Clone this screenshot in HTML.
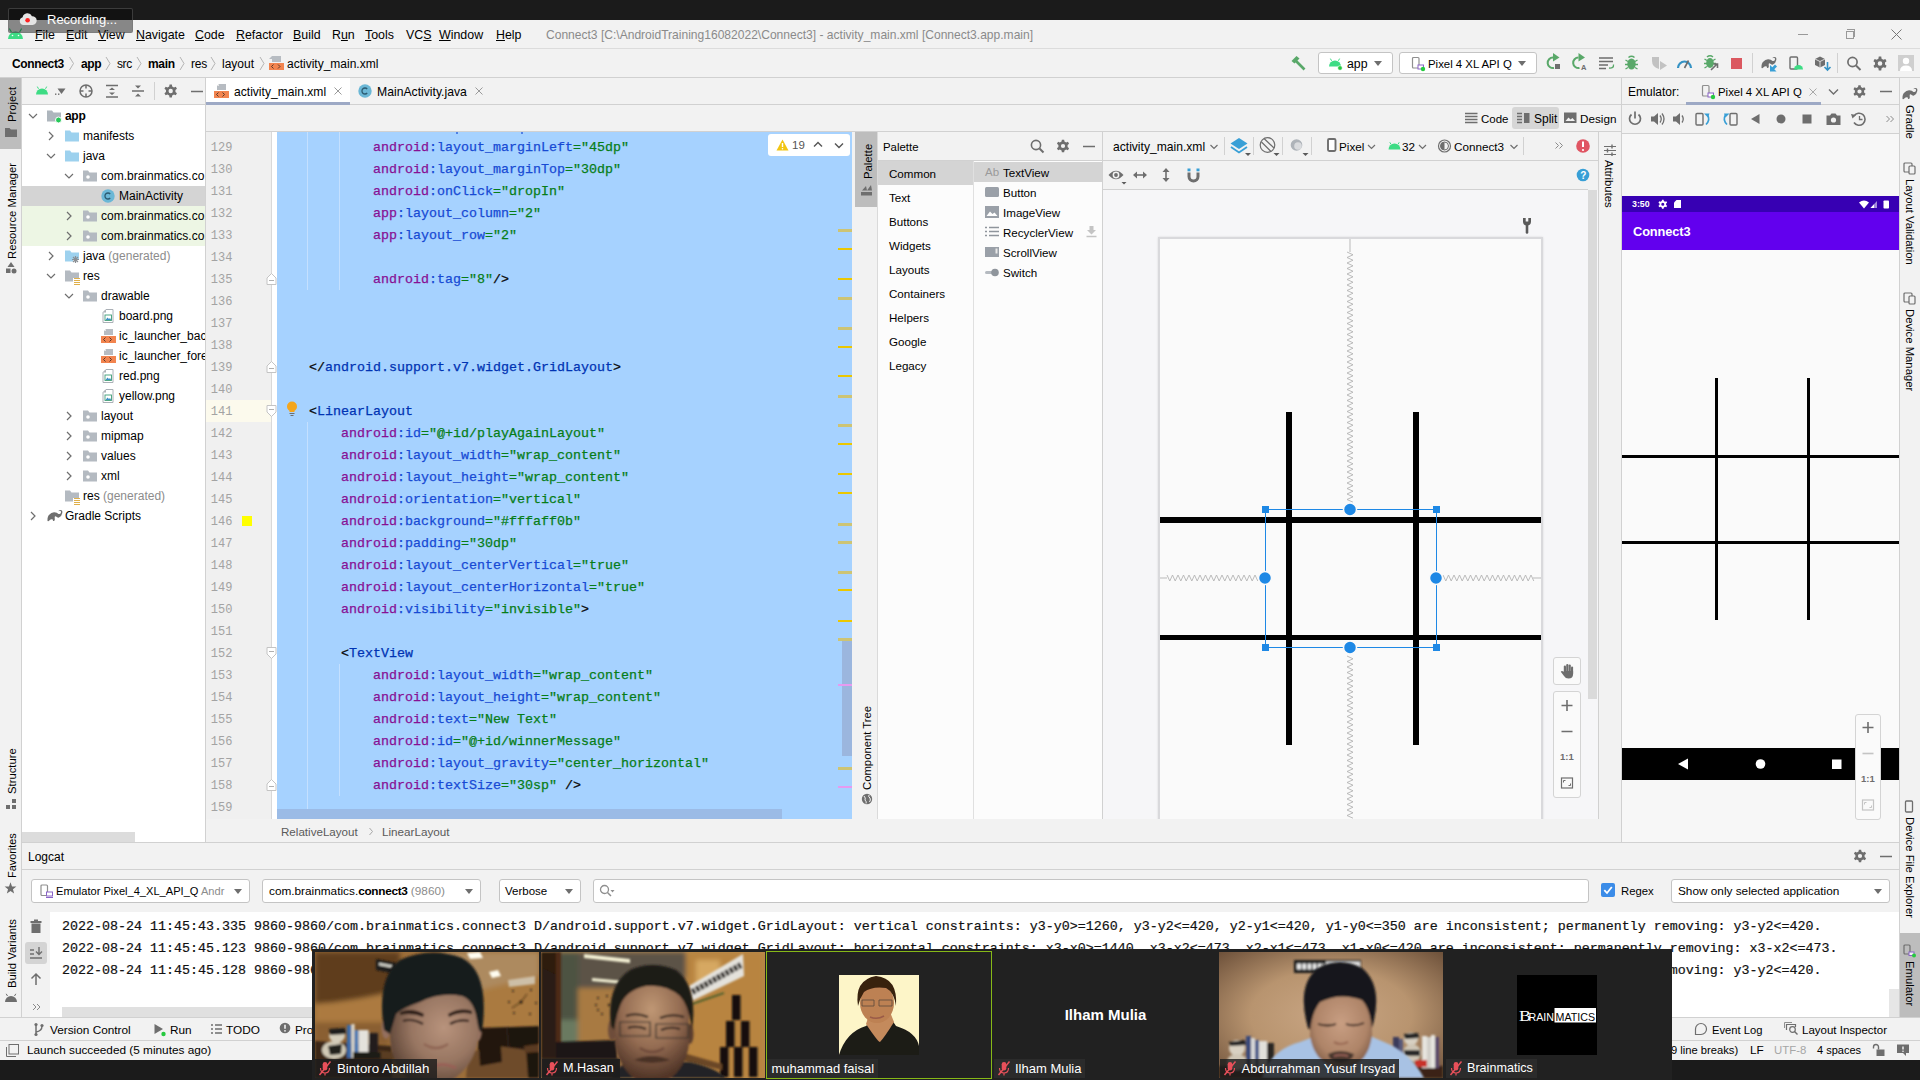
<!DOCTYPE html>
<html><head><meta charset="utf-8"><title>Connect3 - activity_main.xml</title>
<style>
*{box-sizing:border-box;margin:0;padding:0}
html,body{width:1920px;height:1080px;overflow:hidden;background:#f2f2f2;font-family:"Liberation Sans",sans-serif;font-size:12px;color:#000}
.a{position:absolute}
.t{position:absolute;white-space:nowrap;line-height:16px;font-size:12.5px;color:#000}
.g{color:#8c8c8c}
.b{font-weight:bold}
.mono{font-family:"Liberation Mono",monospace}
svg{position:absolute;overflow:visible}
.hl{position:absolute;background:#d1d1d1;height:1px}
.vl{position:absolute;background:#d1d1d1;width:1px}
.vt{position:absolute;white-space:nowrap;font-size:12.5px;line-height:16px;transform-origin:0 0}
.combo{position:absolute;background:#fff;border:1px solid #c4c4c4;border-radius:3px}
.tri{position:absolute;width:0;height:0;border-left:4.5px solid transparent;border-right:4.5px solid transparent;border-top:5.5px solid #6e6e6e}
</style></head><body>
<!-- top black bar -->
<div class="a" style="left:0;top:0;width:1920px;height:20px;background:#1b1b1b"></div>
<!-- menu bar -->
<div class="a" id="menubar" style="left:0;top:20px;width:1920px;height:28px;background:#f2f2f2"></div>
<div class="hl" style="left:0;top:48px;width:1920px;background:#dcdcdc"></div>
<!-- android logo -->
<svg style="left:7px;top:28px" width="17" height="12" viewBox="0 0 17 12"><path d="M1 11 A7.5 7.5 0 0 1 16 11 Z" fill="#3ddc84"/><path d="M4.2 3.8 L2.6 1 M12.8 3.8 L14.4 1" stroke="#3ddc84" stroke-width="1.2" stroke-linecap="round"/><circle cx="5.5" cy="7.5" r=".8" fill="#fff"/><circle cx="11.5" cy="7.5" r=".8" fill="#fff"/></svg>
<div class="t" style="left:35px;top:27px;font-size:12.4px"><u>F</u>ile</div>
<div class="t" style="left:66px;top:27px;font-size:12.4px"><u>E</u>dit</div>
<div class="t" style="left:98px;top:27px;font-size:12.4px"><u>V</u>iew</div>
<div class="t" style="left:136px;top:27px;font-size:12.4px"><u>N</u>avigate</div>
<div class="t" style="left:195px;top:27px;font-size:12.4px"><u>C</u>ode</div>
<div class="t" style="left:236px;top:27px;font-size:12.4px"><u>R</u>efactor</div>
<div class="t" style="left:293px;top:27px;font-size:12.4px"><u>B</u>uild</div>
<div class="t" style="left:332px;top:27px;font-size:12.4px">R<u>u</u>n</div>
<div class="t" style="left:365px;top:27px;font-size:12.4px"><u>T</u>ools</div>
<div class="t" style="left:406px;top:27px;font-size:12.4px">VC<u>S</u></div>
<div class="t" style="left:439px;top:27px;font-size:12.4px"><u>W</u>indow</div>
<div class="t" style="left:496px;top:27px;font-size:12.4px"><u>H</u>elp</div>
<div class="t" id="title" style="left:546px;top:27px;font-size:12.05px;color:#8a8a8a">Connect3 [C:\AndroidTraining16082022\Connect3] - activity_main.xml [Connect3.app.main]</div>
<!-- window controls -->
<div class="a" style="left:1798px;top:34px;width:10px;height:1px;background:#999"></div>
<div class="a" style="left:1846px;top:31px;width:8px;height:8px;border:1px solid #999"></div>
<div class="a" style="left:1844px;top:29px;width:8px;height:8px;border-top:1px solid #999;border-right:1px solid #999;transform:translate(3px,0)"></div>
<svg style="left:1891px;top:29px" width="11" height="11" viewBox="0 0 11 11"><path d="M.5 .5 L10.5 10.5 M10.5 .5 L.5 10.5" stroke="#777" stroke-width="1"/></svg>
<!-- recording overlay -->
<div class="a" style="left:8px;top:8px;width:125px;height:25px;background:rgba(8,8,8,.46);border:1px solid rgba(110,110,110,.45);border-radius:2px"></div>
<svg style="left:19px;top:12px" width="18" height="14" viewBox="0 0 18 14"><path d="M4.5 13 A4 4 0 0 1 3.6 5.2 A5 5 0 0 1 13 4.2 A4.4 4.4 0 0 1 13.6 13 Z" fill="#e4e4e4"/><circle cx="8.6" cy="8.2" r="2.3" fill="#f22"/></svg>
<div class="t" style="left:47px;top:12px;font-size:13px;color:#fff">Recording...</div>
<!-- nav bar -->
<div class="a" style="left:0;top:49px;width:1920px;height:28px;background:#f2f2f2"></div>
<div class="hl" style="left:0;top:77px;width:1920px"></div>
<!-- breadcrumbs -->
<div class="t b" style="left:12px;top:56px;font-size:12px;letter-spacing:-.35px">Connect3</div>
<div class="t b" style="left:81px;top:56px;font-size:12px;letter-spacing:-.4px">app</div>
<div class="t" style="left:117px;top:56px;font-size:12px;letter-spacing:-.4px">src</div>
<div class="t b" style="left:148px;top:56px;font-size:12px;letter-spacing:-.3px">main</div>
<div class="t" style="left:191px;top:56px;font-size:12px;letter-spacing:-.2px">res</div>
<div class="t" style="left:222px;top:56px;font-size:12px">layout</div>
<div class="t" style="left:287px;top:56px;font-size:12px">activity_main.xml</div>
<svg style="left:0;top:49px" width="290" height="28" viewBox="0 0 290 28"><g fill="none" stroke="#b4b4b4" stroke-width="1"><path d="M69.5 8 L73.5 14.5 L69.5 21"/><path d="M106 8 L110 14.5 L106 21"/><path d="M137 8 L141 14.5 L137 21"/><path d="M180 8 L184 14.5 L180 21"/><path d="M211 8 L215 14.5 L211 21"/><path d="M260 8 L264 14.5 L260 21"/></g>
<!-- xml file icon -->
<g id="xmlicon"><path d="M272 7 L278 7 L281 7 L281 13 L272 13 Z" fill="#b7bcc2"/><path d="M269 10 L272 7 L272 10 Z" fill="#b7bcc2"/><rect x="269" y="14" width="15" height="7" fill="#f2844f"/><path d="M273.5 15.5 L271.5 17.5 L273.5 19.5 M278 15.500 L280 17.5 L278 19.5" stroke="#5a3a2a" stroke-width="1" fill="none"/></g></svg>
<!-- hammer -->
<svg style="left:1290px;top:55px" width="17" height="17" viewBox="0 0 17 17"><path d="M5.5 5.5 L14.5 14.5" stroke="#59a869" stroke-width="2.6" stroke-linecap="butt"/><path d="M1.5 6 L6.5 1 L9.5 3.5 L4.5 8.5 Z" fill="#59a869"/></svg>
<!-- run config combos -->
<div class="combo" style="left:1318px;top:52px;width:75px;height:22px"></div>
<svg style="left:1328px;top:57px" width="16" height="14" viewBox="0 0 16 14"><path d="M1 9.5 A6 6 0 0 1 13 9.500 Z" fill="#3ddc84"/><path d="M3.600 3.800 L2.400 1.600 M10.400 3.800 L11.600 1.600" stroke="#3ddc84" stroke-width="1"/><circle cx="12" cy="11" r="2.300" fill="#26c940" stroke="#fff" stroke-width=".6"/></svg>
<div class="t" style="left:1347px;top:56px;font-size:12.3px">app</div>
<div class="tri" style="left:1374px;top:61px"></div>
<div class="combo" style="left:1399px;top:52px;width:138px;height:22px"></div>
<svg style="left:1411px;top:56px" width="16" height="16" viewBox="0 0 16 16"><rect x="1.500" y="1.500" width="6.500" height="10.500" rx="1" fill="none" stroke="#8f8f8f" stroke-width="1.200"/><rect x="7" y="9" width="5.500" height="4" fill="#fff" stroke="#8a63c7" stroke-width="1"/><circle cx="12" cy="13" r="2.200" fill="#26c940"/></svg>
<div class="t" style="left:1428px;top:56px;font-size:11.4px">Pixel 4 XL API Q</div>
<div class="tri" style="left:1518px;top:61px"></div>
<!-- main toolbar icons, centers at y=63 -->
<svg style="left:1540px;top:49px" width="380" height="28" viewBox="0 0 380 28">
<!-- rerun -->
<g fill="none" stroke="#59a869" stroke-width="2"><path d="M13 8.500 A5.300 5.300 0 1 0 14 19"/><path d="M13 4 L19.500 8.500 L13 12.500 Z" fill="#59a869" stroke="none"/></g><rect x="15" y="15" width="5" height="5" fill="#6e6e6e"/>
<g fill="none" stroke="#59a869" stroke-width="2"><path d="M38.500 8.500 A5.300 5.300 0 1 0 39.500 19"/><path d="M38.500 4 L45 8.500 L38.500 12.500 Z" fill="#59a869" stroke="none"/></g><text x="41" y="21" font-family="Liberation Sans" font-size="7.500" font-weight="bold" fill="#6e6e6e">A</text>
<!-- list -->
<g stroke="#6e6e6e" stroke-width="1.400"><path d="M59 9 H73 M59 12.500 H73 M59 16 H68 M59 19.500 H66"/></g><path d="M69 19 Q74 19.500 73.500 15.500" fill="none" stroke="#59a869" stroke-width="1.300"/>
<!-- bug -->
<g><ellipse cx="91.500" cy="15" rx="4.200" ry="5.500" fill="#59a869"/><path d="M88.500 8.500 Q91.500 6 94.500 8.500" stroke="#59a869" stroke-width="1.600" fill="none"/><path d="M85.500 11 L88 12.500 M97.500 11 L95 12.500 M85 15.500 H88 M98 15.500 H95 M85.500 20 L88 18.500 M97.500 20 L95 18.500" stroke="#59a869" stroke-width="1.300"/></g>
<!-- coverage gray -->
<path d="M112 8 L119 8 L119 20 Q112 18 112 12 Z" fill="#c2c2c2"/><path d="M120 12 L127 16.500 L120 21 Z" fill="#c2c2c2"/>
<!-- profiler -->
<path d="M138 19 A6.500 6.500 0 0 1 151 19" fill="none" stroke="#3592c4" stroke-width="2.200"/><path d="M144.500 19 L148.500 11.500" stroke="#6e6e6e" stroke-width="1.600"/>
<!-- attach debugger -->
<g><ellipse cx="170" cy="14" rx="3.800" ry="5" fill="#59a869"/><path d="M167 8 Q170 5.500 173 8" stroke="#59a869" stroke-width="1.500" fill="none"/><path d="M164.500 10 L167 11.500 M175.500 10 L173 11.500 M164 14.500 H167 M176 14.500 H173 M164.500 19 L167 17.500" stroke="#59a869" stroke-width="1.300"/><path d="M171 21 L177 15 M173.500 15 H177.500 V19" stroke="#6e6e6e" stroke-width="1.600" fill="none"/></g>
<!-- stop -->
<rect x="191" y="9" width="11" height="11" fill="#db5860"/>
<path d="M212.500 4 V24" stroke="#d1d1d1" stroke-width="1"/>
<!-- gradle elephant sync -->
<g transform="translate(215,1)"><path d="M6.500 18 Q6.200 13 8.500 11.500 Q10 9.500 13 9.300 Q16 9.200 17.500 11 Q19.500 11.500 20 9.500 Q20.300 8 19 7.800 Q17.800 8 17.300 8.300 Q18 7 19.500 7 Q21.800 7.200 21.300 10 Q20.800 13 18 14.500 Q16.500 15 15 13.500 Q14 12.800 13.700 14 L13.800 17 Q13.500 18.200 12 18 L11.800 16.500 Q10 15.800 8.800 17 Q8 18.500 6.500 18 Z" fill="#6e6e6e"/><path d="M15 15 L15 21.500 L21.500 21.500 L19.300 19.300 L22 16.500 L20 14.500 L17.300 17.200 Z" fill="#389fd6"/></g>
<!-- device manager -->
<rect x="250" y="8" width="7.500" height="12" rx="1" fill="none" stroke="#6e6e6e" stroke-width="1.400"/><path d="M254 20.500 A4.500 4.500 0 0 1 263 20.500 Z" fill="#3ddc84"/>
<!-- sdk manager -->
<path d="M275 10 L280 7.500 L285 10 L285 16 L280 18.500 L275 16 Z" fill="#6e6e6e"/><path d="M275 10 L280 12.500 L285 10 M280 12.500 V18.500" stroke="#f2f2f2" stroke-width=".8" fill="none"/><path d="M287.500 13 V21 M284.500 18 L287.500 21 L290.500 18" stroke="#3592c4" stroke-width="1.600" fill="none"/>
<path d="M297.500 4 V24" stroke="#d1d1d1" stroke-width="1"/>
<!-- search -->
<circle cx="312.500" cy="13" r="4.600" fill="none" stroke="#6e6e6e" stroke-width="1.700"/><path d="M316 16.500 L320.500 21" stroke="#6e6e6e" stroke-width="2"/>
<!-- gear -->
<g transform="translate(340,14.500)"><path d="M-1.58 -4.85 L-1.24 -6.89 L1.24 -6.89 L1.58 -4.85 L3.41 -3.79 L5.35 -4.52 L6.59 -2.37 L4.99 -1.06 L4.99 1.06 L6.59 2.37 L5.35 4.52 L3.41 3.79 L1.58 4.85 L1.24 6.89 L-1.24 6.89 L-1.58 4.85 L-3.41 3.79 L-5.35 4.52 L-6.59 2.37 L-4.99 1.06 L-4.99 -1.06 L-6.59 -2.37 L-5.35 -4.52 L-3.41 -3.79 Z M2.30 0 A2.30 2.30 0 1 0 -2.30 0 A2.30 2.30 0 1 0 2.30 0 Z" fill="#6e6e6e" fill-rule="evenodd"/></g>
<!-- avatar -->
<rect x="358" y="6" width="16" height="16" fill="#cfcfcf"/><circle cx="366" cy="12" r="3.200" fill="#fff"/><path d="M360 22 Q360 16.500 366 16.500 Q372 16.500 372 22 Z" fill="#fff"/>
</svg>
<!-- left tool strip -->
<div class="a" style="left:0;top:78px;width:21px;height:940px;background:#f2f2f2"></div>
<div class="vl" style="left:21px;top:78px;height:940px"></div>
<div class="a" style="left:0;top:78px;width:21px;height:71px;background:#bdbdbd"></div>
<div class="vt" style="left:4px;top:122px;transform:rotate(-90deg);font-size:11.3px">Project</div>
<svg style="left:5px;top:127px" width="12" height="10" viewBox="0 0 12 10"><path d="M0 1 H4.500 L6 2.500 H12 V10 H0 Z" fill="#6e6e6e"/></svg>
<div class="vt" style="left:4px;top:259px;transform:rotate(-90deg);font-size:11.3px">Resource Manager</div>
<svg style="left:5px;top:262px" width="12" height="12" viewBox="0 0 12 12"><path d="M6 0 L9.500 5 H2.500 Z" fill="#6e6e6e"/><rect x="1" y="6.500" width="4.500" height="4.500" fill="#6e6e6e"/><circle cx="9" cy="9" r="2.500" fill="#6e6e6e"/></svg>
<div class="vt" style="left:4px;top:794px;transform:rotate(-90deg);font-size:11.3px">Structure</div>
<svg style="left:6px;top:799px" width="11" height="11" viewBox="0 0 11 11"><rect x="6" y="0" width="4" height="4" fill="#6e6e6e"/><rect x="0" y="6" width="4" height="4" fill="#6e6e6e"/><rect x="6" y="6" width="4" height="4" fill="#6e6e6e"/></svg>
<div class="vt" style="left:4px;top:878px;transform:rotate(-90deg);font-size:10.9px">Favorites</div>
<svg style="left:4px;top:882px" width="13" height="13" viewBox="0 0 13 13"><polygon points="6.50,0.30 8.03,4.40 12.40,4.58 8.97,7.30 10.14,11.52 6.50,9.10 2.86,11.52 4.03,7.30 0.60,4.58 4.97,4.40" fill="#6e6e6e"/></svg>
<div class="vt" style="left:4px;top:988px;transform:rotate(-90deg);font-size:11.3px">Build Variants</div>
<svg style="left:5px;top:993px" width="12" height="9" viewBox="0 0 12 9"><path d="M0 9 A6 6 0 0 1 12 9 Z" fill="#6e6e6e"/><path d="M2.500 3 L1.200 .8 M9.500 3 L10.800 .8" stroke="#6e6e6e" stroke-width="1"/></svg>
<!-- project panel -->
<div class="a" style="left:22px;top:78px;width:184px;height:26px;background:#f2f2f2"></div>
<div class="hl" style="left:22px;top:104px;width:184px"></div>
<div class="a" style="left:22px;top:105px;width:184px;height:737px;background:#fff"></div>
<div class="vl" style="left:205px;top:78px;height:764px"></div>
<div class="hl" style="left:22px;top:842px;width:1877px"></div>
<!-- project toolbar -->
<svg style="left:22px;top:78px" width="184" height="26" viewBox="0 0 184 26">
<path d="M14 16.500 A6 6 0 0 1 26 16.500 Z" fill="#3ddc84"/><path d="M16.500 10.800 L15.300 8.600 M23.500 10.800 L24.700 8.600" stroke="#3ddc84" stroke-width="1"/>
<rect x="33" y="15.500" width="1.400" height="1.400" fill="#6e6e6e"/><rect x="36" y="15.500" width="1.400" height="1.400" fill="#6e6e6e"/><path d="M35.500 10.500 H43.500 L39.500 16 Z" fill="#6e6e6e"/>
<circle cx="64" cy="13" r="6" fill="none" stroke="#6e6e6e" stroke-width="1.500"/><path d="M64 7 V10.500 M64 19 V15.500 M58 13 H61.500 M70 13 H66.500" stroke="#6e6e6e" stroke-width="1.500"/>
<path d="M84 7.500 H96 M84 19 H96" stroke="#6e6e6e" stroke-width="1.500"/><path d="M87 12 L90 9.500 L93 12 Z M87 14.500 L90 17 L93 14.500 Z" fill="#6e6e6e"/>
<path d="M110 13 H122" stroke="#6e6e6e" stroke-width="1.500"/><path d="M113 7.500 L116 10.500 L119 7.500 Z M113 18.500 L116 15.500 L119 18.500 Z" fill="#6e6e6e"/>
<path d="M132.500 4 V22" stroke="#d1d1d1"/>
<g transform="translate(148.700,13)"><path d="M-1.50 -4.61 L-1.18 -6.54 L1.18 -6.54 L1.50 -4.61 L3.24 -3.60 L5.08 -4.29 L6.26 -2.25 L4.74 -1.01 L4.74 1.01 L6.26 2.25 L5.08 4.29 L3.24 3.60 L1.50 4.61 L1.18 6.54 L-1.18 6.54 L-1.50 4.61 L-3.24 3.60 L-5.08 4.29 L-6.26 2.25 L-4.74 1.01 L-4.74 -1.01 L-6.26 -2.25 L-5.08 -4.29 L-3.24 -3.60 Z M2.18 0 A2.18 2.18 0 1 0 -2.18 0 A2.18 2.18 0 1 0 2.18 0 Z" fill="#6e6e6e" fill-rule="evenodd"/></g>
<path d="M169 13.500 H181" stroke="#6e6e6e" stroke-width="1.500"/>
</svg>
<!-- project tree -->
<div class="a" style="left:22px;top:105px;width:183px;height:727px;overflow:hidden">
<svg style="left:6px;top:6px" width="10" height="10" viewBox="0 0 10 10"><path d="M1 3 L5 7 L9 3" fill="none" stroke="#6e6e6e" stroke-width="1.200"/></svg>
<svg style="left:25px;top:4px" width="16" height="16" viewBox="0 0 16 16"><path d="M0 1.500 H5 L6.500 3.500 H14 V12.500 H0 Z" fill="#aeb6bd"/><circle cx="11.500" cy="11" r="3" fill="#26c95a" stroke="#fff" stroke-width="1"/></svg>
<div class="t" style="left:43px;top:3px;font-size:12px"><b style="letter-spacing:-.3px">app</b></div>
<svg style="left:24px;top:26px" width="10" height="10" viewBox="0 0 10 10"><path d="M3 1 L7 5 L3 9" fill="none" stroke="#6e6e6e" stroke-width="1.200"/></svg>
<svg style="left:43px;top:24px" width="16" height="16" viewBox="0 0 16 16"><path d="M0 1.500 H5 L6.500 3.500 H14 V12.500 H0 Z" fill="#9dd1ee"/></svg>
<div class="t" style="left:61px;top:23px;font-size:12px">manifests</div>
<svg style="left:24px;top:46px" width="10" height="10" viewBox="0 0 10 10"><path d="M1 3 L5 7 L9 3" fill="none" stroke="#6e6e6e" stroke-width="1.200"/></svg>
<svg style="left:43px;top:44px" width="16" height="16" viewBox="0 0 16 16"><path d="M0 1.500 H5 L6.500 3.500 H14 V12.500 H0 Z" fill="#9dd1ee"/></svg>
<div class="t" style="left:61px;top:43px;font-size:12px">java</div>
<svg style="left:42px;top:66px" width="10" height="10" viewBox="0 0 10 10"><path d="M1 3 L5 7 L9 3" fill="none" stroke="#6e6e6e" stroke-width="1.200"/></svg>
<svg style="left:61px;top:64px" width="16" height="16" viewBox="0 0 16 16"><path d="M0 1.500 H5 L6.500 3.500 H14 V12.500 H0 Z" fill="#b4bac1"/><circle cx="5" cy="8" r="1.800" fill="#fff"/></svg>
<div class="t" style="left:79px;top:63px;font-size:12px">com.brainmatics.co</div>
<div class="a" style="left:0;top:81px;width:183px;height:20px;background:#d4d4d4"></div>
<svg style="left:79px;top:84px" width="16" height="16" viewBox="0 0 16 16"><circle cx="7" cy="7" r="6.700" fill="#6bb7d6"/><path d="M9.200 5 A3 3 0 1 0 9.200 9" fill="none" stroke="#2b5a70" stroke-width="1.300"/></svg>
<div class="t" style="left:97px;top:83px;font-size:12px">MainActivity</div>
<div class="a" style="left:0;top:101px;width:183px;height:20px;background:#edf6e4"></div>
<svg style="left:42px;top:106px" width="10" height="10" viewBox="0 0 10 10"><path d="M3 1 L7 5 L3 9" fill="none" stroke="#6e6e6e" stroke-width="1.200"/></svg>
<svg style="left:61px;top:104px" width="16" height="16" viewBox="0 0 16 16"><path d="M0 1.500 H5 L6.500 3.500 H14 V12.500 H0 Z" fill="#b4bac1"/><circle cx="5" cy="8" r="1.800" fill="#fff"/></svg>
<div class="t" style="left:79px;top:103px;font-size:12px">com.brainmatics.co</div>
<div class="a" style="left:0;top:121px;width:183px;height:20px;background:#edf6e4"></div>
<svg style="left:42px;top:126px" width="10" height="10" viewBox="0 0 10 10"><path d="M3 1 L7 5 L3 9" fill="none" stroke="#6e6e6e" stroke-width="1.200"/></svg>
<svg style="left:61px;top:124px" width="16" height="16" viewBox="0 0 16 16"><path d="M0 1.500 H5 L6.500 3.500 H14 V12.500 H0 Z" fill="#b4bac1"/><circle cx="5" cy="8" r="1.800" fill="#fff"/></svg>
<div class="t" style="left:79px;top:123px;font-size:12px">com.brainmatics.co</div>
<svg style="left:24px;top:146px" width="10" height="10" viewBox="0 0 10 10"><path d="M3 1 L7 5 L3 9" fill="none" stroke="#6e6e6e" stroke-width="1.200"/></svg>
<svg style="left:43px;top:144px" width="16" height="16" viewBox="0 0 16 16"><path d="M0 1.500 H5 L6.500 3.500 H14 V10 H8 V12.500 H0 Z" fill="#9dd1ee"/><g transform="translate(10.500,10.500)" stroke="#8a8f94" stroke-width="1.200"><path d="M-3.500 0 H3.500 M0 -3.500 V3.500 M-2.500 -2.500 L2.500 2.500 M-2.500 2.500 L2.500 -2.500"/></g></svg>
<div class="t" style="left:61px;top:143px;font-size:12px">java <span class="g">(generated)</span></div>
<svg style="left:24px;top:166px" width="10" height="10" viewBox="0 0 10 10"><path d="M1 3 L5 7 L9 3" fill="none" stroke="#6e6e6e" stroke-width="1.200"/></svg>
<svg style="left:43px;top:164px" width="16" height="16" viewBox="0 0 16 16"><path d="M0 1.500 H5 L6.500 3.500 H14 V9 H8 V12.500 H0 Z" fill="#b4bac1"/><path d="M9 9.500 H15 M9 11.500 H15 M9 13.500 H15 M9 15.500 H15" stroke="#e0b04a" stroke-width="1.100"/></svg>
<div class="t" style="left:61px;top:163px;font-size:12px">res</div>
<svg style="left:42px;top:186px" width="10" height="10" viewBox="0 0 10 10"><path d="M1 3 L5 7 L9 3" fill="none" stroke="#6e6e6e" stroke-width="1.200"/></svg>
<svg style="left:61px;top:184px" width="16" height="16" viewBox="0 0 16 16"><path d="M0 1.500 H5 L6.500 3.500 H14 V12.500 H0 Z" fill="#b4bac1"/><circle cx="5" cy="8" r="1.800" fill="#fff"/></svg>
<div class="t" style="left:79px;top:183px;font-size:12px">drawable</div>
<svg style="left:79px;top:204px" width="16" height="16" viewBox="0 0 16 16"><path d="M2 3.500 L5 .5 H12 V13.500 H2 Z" fill="#fff" stroke="#aab0b6" stroke-width="1"/><path d="M2 3.500 L5 .5 V3.500 Z" fill="#aab0b6"/><rect x="4" y="6" width="6.500" height="5.500" fill="#fff" stroke="#3f9d77" stroke-width=".9"/><path d="M4.500 11 L6.500 8.500 L8 10 L9 9 L10.200 11 Z" fill="#3a8fc4"/></svg>
<div class="t" style="left:97px;top:203px;font-size:12px">board.png</div>
<svg style="left:79px;top:224px" width="16" height="16" viewBox="0 0 16 16"><path d="M5 0 H12 V6 H3 V2 Z" fill="#b7bcc2"/><path d="M3 2 L5 0 V2 Z" fill="#e6e6e6"/><rect x="0" y="7" width="15" height="7" fill="#f2844f"/><path d="M4.500 8.500 L2.500 10.500 L4.500 12.500 M8.500 8.500 L10.500 10.500 L8.500 12.500" stroke="#5a3a2a" stroke-width="1" fill="none"/></svg>
<div class="t" style="left:97px;top:223px;font-size:12px">ic_launcher_back</div>
<svg style="left:79px;top:244px" width="16" height="16" viewBox="0 0 16 16"><path d="M5 0 H12 V6 H3 V2 Z" fill="#b7bcc2"/><path d="M3 2 L5 0 V2 Z" fill="#e6e6e6"/><rect x="0" y="7" width="15" height="7" fill="#f2844f"/><path d="M4.500 8.500 L2.500 10.500 L4.500 12.500 M8.500 8.500 L10.500 10.500 L8.500 12.500" stroke="#5a3a2a" stroke-width="1" fill="none"/></svg>
<div class="t" style="left:97px;top:243px;font-size:12px">ic_launcher_fore</div>
<svg style="left:79px;top:264px" width="16" height="16" viewBox="0 0 16 16"><path d="M2 3.500 L5 .5 H12 V13.500 H2 Z" fill="#fff" stroke="#aab0b6" stroke-width="1"/><path d="M2 3.500 L5 .5 V3.500 Z" fill="#aab0b6"/><rect x="4" y="6" width="6.500" height="5.500" fill="#fff" stroke="#3f9d77" stroke-width=".9"/><path d="M4.500 11 L6.500 8.500 L8 10 L9 9 L10.200 11 Z" fill="#3a8fc4"/></svg>
<div class="t" style="left:97px;top:263px;font-size:12px">red.png</div>
<svg style="left:79px;top:284px" width="16" height="16" viewBox="0 0 16 16"><path d="M2 3.500 L5 .5 H12 V13.500 H2 Z" fill="#fff" stroke="#aab0b6" stroke-width="1"/><path d="M2 3.500 L5 .5 V3.500 Z" fill="#aab0b6"/><rect x="4" y="6" width="6.500" height="5.500" fill="#fff" stroke="#3f9d77" stroke-width=".9"/><path d="M4.500 11 L6.500 8.500 L8 10 L9 9 L10.200 11 Z" fill="#3a8fc4"/></svg>
<div class="t" style="left:97px;top:283px;font-size:12px">yellow.png</div>
<svg style="left:42px;top:306px" width="10" height="10" viewBox="0 0 10 10"><path d="M3 1 L7 5 L3 9" fill="none" stroke="#6e6e6e" stroke-width="1.200"/></svg>
<svg style="left:61px;top:304px" width="16" height="16" viewBox="0 0 16 16"><path d="M0 1.500 H5 L6.500 3.500 H14 V12.500 H0 Z" fill="#b4bac1"/><circle cx="5" cy="8" r="1.800" fill="#fff"/></svg>
<div class="t" style="left:79px;top:303px;font-size:12px">layout</div>
<svg style="left:42px;top:326px" width="10" height="10" viewBox="0 0 10 10"><path d="M3 1 L7 5 L3 9" fill="none" stroke="#6e6e6e" stroke-width="1.200"/></svg>
<svg style="left:61px;top:324px" width="16" height="16" viewBox="0 0 16 16"><path d="M0 1.500 H5 L6.500 3.500 H14 V12.500 H0 Z" fill="#b4bac1"/><circle cx="5" cy="8" r="1.800" fill="#fff"/></svg>
<div class="t" style="left:79px;top:323px;font-size:12px">mipmap</div>
<svg style="left:42px;top:346px" width="10" height="10" viewBox="0 0 10 10"><path d="M3 1 L7 5 L3 9" fill="none" stroke="#6e6e6e" stroke-width="1.200"/></svg>
<svg style="left:61px;top:344px" width="16" height="16" viewBox="0 0 16 16"><path d="M0 1.500 H5 L6.500 3.500 H14 V12.500 H0 Z" fill="#b4bac1"/><circle cx="5" cy="8" r="1.800" fill="#fff"/></svg>
<div class="t" style="left:79px;top:343px;font-size:12px">values</div>
<svg style="left:42px;top:366px" width="10" height="10" viewBox="0 0 10 10"><path d="M3 1 L7 5 L3 9" fill="none" stroke="#6e6e6e" stroke-width="1.200"/></svg>
<svg style="left:61px;top:364px" width="16" height="16" viewBox="0 0 16 16"><path d="M0 1.500 H5 L6.500 3.500 H14 V12.500 H0 Z" fill="#b4bac1"/><circle cx="5" cy="8" r="1.800" fill="#fff"/></svg>
<div class="t" style="left:79px;top:363px;font-size:12px">xml</div>
<svg style="left:43px;top:384px" width="16" height="16" viewBox="0 0 16 16"><path d="M0 1.500 H5 L6.500 3.500 H14 V9 H8 V12.500 H0 Z" fill="#b4bac1"/><path d="M9 9.500 H15 M9 11.500 H15 M9 13.500 H15 M9 15.500 H15" stroke="#e0b04a" stroke-width="1.100"/></svg>
<div class="t" style="left:61px;top:383px;font-size:12px">res <span class="g">(generated)</span></div>
<svg style="left:6px;top:406px" width="10" height="10" viewBox="0 0 10 10"><path d="M3 1 L7 5 L3 9" fill="none" stroke="#6e6e6e" stroke-width="1.200"/></svg>
<svg style="left:25px;top:404px" width="16" height="16" viewBox="0 0 16 16"><g transform="translate(-6,-6)"><path d="M6.500 18 Q6.200 13 8.500 11.500 Q10 9.500 13 9.300 Q16 9.200 17.500 11 Q19.500 11.500 20 9.500 Q20.300 8 19 7.800 Q17.800 8 17.300 8.300 Q18 7 19.500 7 Q21.800 7.200 21.300 10 Q20.800 13 18 14.500 Q16.500 15 15 13.500 Q14 12.800 13.700 14 L13.800 17 Q13.500 18.200 12 18 L11.800 16.500 Q10 15.800 8.800 17 Q8 18.500 6.500 18 Z" fill="#6e6e6e"/></g></svg>
<div class="t" style="left:43px;top:403px;font-size:12px">Gradle Scripts</div>
</div>
<div class="a" style="left:22px;top:832px;width:113px;height:10px;background:#dcdcdc"></div>
<!-- editor tabs -->
<div class="a" style="left:206px;top:78px;width:1415px;height:26px;background:#f2f2f2"></div>
<div class="a" style="left:206px;top:78px;width:144px;height:26px;background:#fff"></div>
<div class="hl" style="left:206px;top:104px;width:1415px"></div>
<div class="a" style="left:206px;top:102px;width:144px;height:3px;background:#9da9c5"></div>
<svg style="left:214px;top:84px" width="16" height="16" viewBox="0 0 16 16"><path d="M5 0 H12 V6 H3 V2 Z" fill="#b7bcc2"/><path d="M3 2 L5 0 V2 Z" fill="#e6e6e6"/><rect x="0" y="7" width="15" height="7" fill="#f2844f"/><path d="M4.500 8.500 L2.500 10.500 L4.500 12.500 M8.500 8.500 L10.500 10.500 L8.500 12.500" stroke="#5a3a2a" stroke-width="1" fill="none"/></svg>
<div class="t" style="left:234px;top:84px;font-size:12.1px">activity_main.xml</div>
<svg style="left:334px;top:87px" width="8" height="8" viewBox="0 0 8 8"><path d="M.5 .5 L7.500 7.500 M7.500 .5 L.5 7.500" stroke="#9a9a9a" stroke-width="1"/></svg>
<svg style="left:358px;top:84px" width="14" height="14" viewBox="0 0 14 14"><circle cx="7" cy="7" r="6.700" fill="#6bb7d6"/><path d="M9.200 5 A3 3 0 1 0 9.200 9" fill="none" stroke="#2b5a70" stroke-width="1.300"/></svg>
<div class="t" style="left:377px;top:84px;font-size:12.2px">MainActivity.java</div>
<svg style="left:475px;top:87px" width="8" height="8" viewBox="0 0 8 8"><path d="M.5 .5 L7.500 7.500 M7.500 .5 L.5 7.500" stroke="#9a9a9a" stroke-width="1"/></svg>
<div class="a" style="left:206px;top:105px;width:1415px;height:26px;background:#f2f2f2"></div>
<div class="hl" style="left:206px;top:131px;width:1415px"></div>
<div class="a" style="left:1512px;top:107px;width:47px;height:22px;background:#d6d6d6;border-radius:3px"></div>
<svg style="left:1465px;top:112px" width="13" height="12" viewBox="0 0 13 12"><path d="M0 1.500 H12.500 M0 4.500 H12.500 M0 7.500 H12.500 M0 10.500 H12.500" stroke="#6e6e6e" stroke-width="1.300"/></svg>
<div class="t" style="left:1481px;top:111px;font-size:11.5px">Code</div>
<svg style="left:1517px;top:112px" width="13" height="12" viewBox="0 0 13 12"><path d="M0 1.500 H5 M0 4.500 H5 M0 7.500 H5 M0 10.500 H5" stroke="#6e6e6e" stroke-width="1.300"/><rect x="7" y="1" width="5.500" height="10" fill="#6e6e6e"/></svg>
<div class="t" style="left:1534px;top:111px;font-size:12px">Split</div>
<svg style="left:1564px;top:112px" width="13" height="12" viewBox="0 0 13 12"><rect x="0" y=".5" width="12.500" height="10.500" fill="#6e6e6e"/><path d="M1.500 9 L4.500 5.500 L6.500 7.500 L8.500 6 L11 9 Z" fill="#f2f2f2"/></svg>
<div class="t" style="left:1580px;top:111px;font-size:11.7px">Design</div>
<div class="a" id="editor" style="left:206px;top:132px;width:646px;height:687px;background:#fff;overflow:hidden">
<div class="a" style="left:0;top:0;width:65px;height:687px;background:#f0f0f0"></div>
<div class="a" style="left:0;top:268px;width:65px;height:22px;background:#fcfaed"></div>
<div class="vl" style="left:65px;top:0;height:687px;background:#d9d9d9"></div>
<div class="a" style="left:71px;top:0;width:575px;height:687px;background:#a6d2ff"></div>
<div class="vl" style="left:101px;top:0px;height:158px;background:#c4e0ff"></div>
<div class="vl" style="left:133px;top:0px;height:158px;background:#c4e0ff"></div>
<div class="vl" style="left:101px;top:290px;height:397px;background:#c4e0ff"></div>
<div class="vl" style="left:133px;top:532px;height:132px;background:#c4e0ff"></div>
<div class="a" style="left:71px;top:677px;width:505px;height:10px;background:#9bbbe6"></div>
<div class="a" style="left:636px;top:508px;width:10px;height:116px;background:#9bb6de"></div>
<div class="a" style="left:632px;top:97px;width:14px;height:3px;background:#cdc474"></div>
<div class="a" style="left:632px;top:116px;width:14px;height:2px;background:#ebc700"></div>
<div class="a" style="left:632px;top:146px;width:14px;height:2px;background:#ebc700"></div>
<div class="a" style="left:632px;top:165px;width:14px;height:3px;background:#cdc474"></div>
<div class="a" style="left:632px;top:195px;width:14px;height:3px;background:#cdc474"></div>
<div class="a" style="left:632px;top:214px;width:14px;height:2px;background:#ebc700"></div>
<div class="a" style="left:632px;top:243px;width:14px;height:2px;background:#ebc700"></div>
<div class="a" style="left:632px;top:263px;width:14px;height:3px;background:#cdc474"></div>
<div class="a" style="left:632px;top:292px;width:14px;height:3px;background:#cdc474"></div>
<div class="a" style="left:632px;top:311px;width:14px;height:2px;background:#ebc700"></div>
<div class="a" style="left:632px;top:341px;width:14px;height:2px;background:#ebc700"></div>
<div class="a" style="left:632px;top:360px;width:14px;height:2px;background:#ebc700"></div>
<div class="a" style="left:632px;top:391px;width:14px;height:3px;background:#cdc474"></div>
<div class="a" style="left:632px;top:409px;width:14px;height:3px;background:#cdc474"></div>
<div class="a" style="left:632px;top:439px;width:14px;height:3px;background:#cdc474"></div>
<div class="a" style="left:632px;top:457px;width:14px;height:2px;background:#ebc700"></div>
<div class="a" style="left:632px;top:488px;width:14px;height:2px;background:#ebc700"></div>
<div class="a" style="left:632px;top:506px;width:14px;height:3px;background:#cdc474"></div>
<div class="a" style="left:632px;top:635px;width:14px;height:3px;background:#cdc474"></div>
<div class="a" style="left:632px;top:552px;width:14px;height:1.500px;background:#e69af0"></div>
<div class="a" style="left:632px;top:654px;width:14px;height:1.500px;background:#e69af0"></div>
<div class="t mono" style="left:4.800px;top:8px;font-size:12px;color:#a3a3a3">129</div>
<div class="t mono" style="left:167px;top:7.8px;font-size:13.33px;-webkit-text-stroke:.25px"><span style="color:#871094">android</span><span style="color:#174ad4">:layout_marginLeft</span><span style="color:#067d17">="45dp"</span></div>
<div class="t mono" style="left:4.800px;top:30px;font-size:12px;color:#a3a3a3">130</div>
<div class="t mono" style="left:167px;top:29.8px;font-size:13.33px;-webkit-text-stroke:.25px"><span style="color:#871094">android</span><span style="color:#174ad4">:layout_marginTop</span><span style="color:#067d17">="30dp"</span></div>
<div class="t mono" style="left:4.800px;top:52px;font-size:12px;color:#a3a3a3">131</div>
<div class="t mono" style="left:167px;top:51.8px;font-size:13.33px;-webkit-text-stroke:.25px"><span style="color:#871094">android</span><span style="color:#174ad4">:onClick</span><span style="color:#067d17">="dropIn"</span></div>
<div class="t mono" style="left:4.800px;top:74px;font-size:12px;color:#a3a3a3">132</div>
<div class="t mono" style="left:167px;top:73.8px;font-size:13.33px;-webkit-text-stroke:.25px"><span style="color:#871094">app</span><span style="color:#174ad4">:layout_column</span><span style="color:#067d17">="2"</span></div>
<div class="t mono" style="left:4.800px;top:96px;font-size:12px;color:#a3a3a3">133</div>
<div class="t mono" style="left:167px;top:95.8px;font-size:13.33px;-webkit-text-stroke:.25px"><span style="color:#871094">app</span><span style="color:#174ad4">:layout_row</span><span style="color:#067d17">="2"</span></div>
<div class="t mono" style="left:4.800px;top:118px;font-size:12px;color:#a3a3a3">134</div>
<div class="t mono" style="left:4.800px;top:140px;font-size:12px;color:#a3a3a3">135</div>
<div class="t mono" style="left:167px;top:139.8px;font-size:13.33px;-webkit-text-stroke:.25px"><span style="color:#871094">android</span><span style="color:#174ad4">:tag</span><span style="color:#067d17">="8"</span><span style="color:#080808">/&gt;</span></div>
<div class="t mono" style="left:4.800px;top:162px;font-size:12px;color:#a3a3a3">136</div>
<div class="t mono" style="left:4.800px;top:184px;font-size:12px;color:#a3a3a3">137</div>
<div class="t mono" style="left:4.800px;top:206px;font-size:12px;color:#a3a3a3">138</div>
<div class="t mono" style="left:4.800px;top:228px;font-size:12px;color:#a3a3a3">139</div>
<div class="t mono" style="left:103px;top:227.8px;font-size:13.33px;-webkit-text-stroke:.25px"><span style="color:#080808">&lt;/</span><span style="color:#0033b3">android.support.v7.widget.GridLayout</span><span style="color:#080808">&gt;</span></div>
<div class="t mono" style="left:4.800px;top:250px;font-size:12px;color:#a3a3a3">140</div>
<div class="t mono" style="left:4.800px;top:272px;font-size:12px;color:#a3a3a3">141</div>
<div class="t mono" style="left:103px;top:271.8px;font-size:13.33px;-webkit-text-stroke:.25px"><span style="color:#080808">&lt;</span><span style="color:#0033b3">LinearLayout</span><span style="color:#080808"></span></div>
<div class="t mono" style="left:4.800px;top:294px;font-size:12px;color:#a3a3a3">142</div>
<div class="t mono" style="left:135px;top:293.8px;font-size:13.33px;-webkit-text-stroke:.25px"><span style="color:#871094">android</span><span style="color:#174ad4">:id</span><span style="color:#067d17">="@+id/playAgainLayout"</span></div>
<div class="t mono" style="left:4.800px;top:316px;font-size:12px;color:#a3a3a3">143</div>
<div class="t mono" style="left:135px;top:315.8px;font-size:13.33px;-webkit-text-stroke:.25px"><span style="color:#871094">android</span><span style="color:#174ad4">:layout_width</span><span style="color:#067d17">="wrap_content"</span></div>
<div class="t mono" style="left:4.800px;top:338px;font-size:12px;color:#a3a3a3">144</div>
<div class="t mono" style="left:135px;top:337.8px;font-size:13.33px;-webkit-text-stroke:.25px"><span style="color:#871094">android</span><span style="color:#174ad4">:layout_height</span><span style="color:#067d17">="wrap_content"</span></div>
<div class="t mono" style="left:4.800px;top:360px;font-size:12px;color:#a3a3a3">145</div>
<div class="t mono" style="left:135px;top:359.8px;font-size:13.33px;-webkit-text-stroke:.25px"><span style="color:#871094">android</span><span style="color:#174ad4">:orientation</span><span style="color:#067d17">="vertical"</span></div>
<div class="t mono" style="left:4.800px;top:382px;font-size:12px;color:#a3a3a3">146</div>
<div class="t mono" style="left:135px;top:381.8px;font-size:13.33px;-webkit-text-stroke:.25px"><span style="color:#871094">android</span><span style="color:#174ad4">:background</span><span style="color:#067d17">="#fffaff0b"</span></div>
<div class="t mono" style="left:4.800px;top:404px;font-size:12px;color:#a3a3a3">147</div>
<div class="t mono" style="left:135px;top:403.8px;font-size:13.33px;-webkit-text-stroke:.25px"><span style="color:#871094">android</span><span style="color:#174ad4">:padding</span><span style="color:#067d17">="30dp"</span></div>
<div class="t mono" style="left:4.800px;top:426px;font-size:12px;color:#a3a3a3">148</div>
<div class="t mono" style="left:135px;top:425.8px;font-size:13.33px;-webkit-text-stroke:.25px"><span style="color:#871094">android</span><span style="color:#174ad4">:layout_centerVertical</span><span style="color:#067d17">="true"</span></div>
<div class="t mono" style="left:4.800px;top:448px;font-size:12px;color:#a3a3a3">149</div>
<div class="t mono" style="left:135px;top:447.8px;font-size:13.33px;-webkit-text-stroke:.25px"><span style="color:#871094">android</span><span style="color:#174ad4">:layout_centerHorizontal</span><span style="color:#067d17">="true"</span></div>
<div class="t mono" style="left:4.800px;top:470px;font-size:12px;color:#a3a3a3">150</div>
<div class="t mono" style="left:135px;top:469.8px;font-size:13.33px;-webkit-text-stroke:.25px"><span style="color:#871094">android</span><span style="color:#174ad4">:visibility</span><span style="color:#067d17">="invisible"</span><span style="color:#080808">&gt;</span></div>
<div class="t mono" style="left:4.800px;top:492px;font-size:12px;color:#a3a3a3">151</div>
<div class="t mono" style="left:4.800px;top:514px;font-size:12px;color:#a3a3a3">152</div>
<div class="t mono" style="left:135px;top:513.8px;font-size:13.33px;-webkit-text-stroke:.25px"><span style="color:#080808">&lt;</span><span style="color:#0033b3">TextView</span><span style="color:#080808"></span></div>
<div class="t mono" style="left:4.800px;top:536px;font-size:12px;color:#a3a3a3">153</div>
<div class="t mono" style="left:167px;top:535.8px;font-size:13.33px;-webkit-text-stroke:.25px"><span style="color:#871094">android</span><span style="color:#174ad4">:layout_width</span><span style="color:#067d17">="wrap_content"</span></div>
<div class="t mono" style="left:4.800px;top:558px;font-size:12px;color:#a3a3a3">154</div>
<div class="t mono" style="left:167px;top:557.8px;font-size:13.33px;-webkit-text-stroke:.25px"><span style="color:#871094">android</span><span style="color:#174ad4">:layout_height</span><span style="color:#067d17">="wrap_content"</span></div>
<div class="t mono" style="left:4.800px;top:580px;font-size:12px;color:#a3a3a3">155</div>
<div class="t mono" style="left:167px;top:579.8px;font-size:13.33px;-webkit-text-stroke:.25px"><span style="color:#871094">android</span><span style="color:#174ad4">:text</span><span style="color:#067d17">="New Text"</span></div>
<div class="t mono" style="left:4.800px;top:602px;font-size:12px;color:#a3a3a3">156</div>
<div class="t mono" style="left:167px;top:601.8px;font-size:13.33px;-webkit-text-stroke:.25px"><span style="color:#871094">android</span><span style="color:#174ad4">:id</span><span style="color:#067d17">="@+id/winnerMessage"</span></div>
<div class="t mono" style="left:4.800px;top:624px;font-size:12px;color:#a3a3a3">157</div>
<div class="t mono" style="left:167px;top:623.8px;font-size:13.33px;-webkit-text-stroke:.25px"><span style="color:#871094">android</span><span style="color:#174ad4">:layout_gravity</span><span style="color:#067d17">="center_horizontal"</span></div>
<div class="t mono" style="left:4.800px;top:646px;font-size:12px;color:#a3a3a3">158</div>
<div class="t mono" style="left:167px;top:645.8px;font-size:13.33px;-webkit-text-stroke:.25px"><span style="color:#871094">android</span><span style="color:#174ad4">:textSize</span><span style="color:#067d17">="30sp"</span><span style="color:#080808"> /&gt;</span></div>
<div class="t mono" style="left:4.800px;top:668px;font-size:12px;color:#a3a3a3">159</div>
<div class="a" style="left:250px;top:0;width:2px;height:2px;background:#174ad4;opacity:.6"></div>
<div class="a" style="left:315px;top:0;width:2px;height:2px;background:#174ad4;opacity:.6"></div>
<svg style="left:60px;top:141px" width="11" height="12" viewBox="0 0 11 12"><path d="M1 11.500 H10 V5 L5.500 .5 L1 5 Z" fill="#fff" stroke="#c4c4c4" stroke-width="1"/><path d="M3 7.500 H8" stroke="#b0b0b0" stroke-width="1"/></svg>
<svg style="left:60px;top:229px" width="11" height="12" viewBox="0 0 11 12"><path d="M1 11.500 H10 V5 L5.500 .5 L1 5 Z" fill="#fff" stroke="#c4c4c4" stroke-width="1"/><path d="M3 7.500 H8" stroke="#b0b0b0" stroke-width="1"/></svg>
<svg style="left:60px;top:273px" width="11" height="12" viewBox="0 0 11 12"><path d="M1 .5 H10 V7 L5.500 11.500 L1 7 Z" fill="#fff" stroke="#c4c4c4" stroke-width="1"/><path d="M3 4.500 H8" stroke="#b0b0b0" stroke-width="1"/></svg>
<svg style="left:60px;top:515px" width="11" height="12" viewBox="0 0 11 12"><path d="M1 .5 H10 V7 L5.500 11.500 L1 7 Z" fill="#fff" stroke="#c4c4c4" stroke-width="1"/><path d="M3 4.500 H8" stroke="#b0b0b0" stroke-width="1"/></svg>
<svg style="left:60px;top:647px" width="11" height="12" viewBox="0 0 11 12"><path d="M1 11.500 H10 V5 L5.500 .5 L1 5 Z" fill="#fff" stroke="#c4c4c4" stroke-width="1"/><path d="M3 7.500 H8" stroke="#b0b0b0" stroke-width="1"/></svg>
<svg style="left:80px;top:269px" width="12" height="16" viewBox="0 0 12 16"><circle cx="6" cy="5.500" r="5" fill="#f4a51c"/><rect x="3.500" y="9" width="5" height="2" fill="#f4a51c"/><path d="M3.500 12.500 H8.500 M4.500 14.500 H7.500" stroke="#6e6e6e" stroke-width="1.200"/></svg>
<div class="a" style="left:36px;top:384px;width:10px;height:10px;background:#ffff00"></div>
<div class="a" style="left:562px;top:2px;width:82px;height:22px;background:#fff;border-radius:3px"></div>
<svg style="left:570px;top:7px" width="13" height="12" viewBox="0 0 13 12"><path d="M6.500 .5 L12.500 11.500 H.5 Z" fill="#f2c512"/><path d="M6.500 4 V8" stroke="#fff" stroke-width="1.400"/><circle cx="6.500" cy="9.800" r=".8" fill="#fff"/></svg>
<div class="t" style="left:586px;top:5px;font-size:11.500px;color:#555">19</div>
<svg style="left:607px;top:9px" width="10" height="7" viewBox="0 0 10 7"><path d="M1 5.500 L5 1.500 L9 5.500" fill="none" stroke="#555" stroke-width="1.400"/></svg>
<svg style="left:628px;top:10px" width="10" height="7" viewBox="0 0 10 7"><path d="M1 1.500 L5 5.500 L9 1.500" fill="none" stroke="#555" stroke-width="1.400"/></svg>
</div>
<div class="a" style="left:206px;top:819px;width:672px;height:23px;background:#f2f2f2"></div>
<div class="t" style="left:281px;top:824px;font-size:11.6px;color:#5a5a5a">RelativeLayout</div>
<svg style="left:368px;top:827px" width="6" height="9" viewBox="0 0 6 9"><path d="M1.500 1 L4.500 4.500 L1.500 8" fill="none" stroke="#a8a8a8" stroke-width="1"/></svg>
<div class="t" style="left:382px;top:824px;font-size:11.7px;color:#5a5a5a">LinearLayout</div>
<!-- palette strip -->
<div class="a" style="left:852px;top:132px;width:26px;height:687px;background:#f2f2f2"></div>
<div class="a" style="left:855px;top:132px;width:23px;height:75px;background:#bdbdbd"></div>
<div class="vt" style="left:860px;top:179px;transform:rotate(-90deg);font-size:11.3px">Palette</div>
<svg style="left:861px;top:184px" width="12" height="12" viewBox="0 0 12 12"><rect x="0" y="8" width="11" height="3.500" fill="#6e6e6e"/><path d="M1 6.500 L5 2 L6 6.500 Z M6 6.500 L10 1 L11 6.500 Z" fill="#6e6e6e"/></svg>
<div class="vt" style="left:859px;top:790px;transform:rotate(-90deg);font-size:11.3px">Component Tree</div>
<svg style="left:861px;top:793px" width="12" height="12" viewBox="0 0 12 12"><circle cx="6" cy="6" r="5.200" fill="#6e6e6e"/><path d="M3 3 Q5 5 4 7 Q6 9 5 10.500 M8 2 Q7 4 9 5 Q10 7 8.500 9" stroke="#f2f2f2" stroke-width="1" fill="none"/></svg>
<!-- palette panel -->
<div class="vl" style="left:877px;top:132px;height:687px;background:#dadada"></div>
<div class="a" style="left:878px;top:132px;width:224px;height:28px;background:#f2f2f2"></div>
<div class="hl" style="left:878px;top:160px;width:224px"></div>
<div class="a" style="left:878px;top:161px;width:224px;height:658px;background:#fcfcfc"></div>
<div class="vl" style="left:973px;top:161px;height:658px;background:#e0e0e0"></div>
<div class="vl" style="left:1102px;top:132px;height:687px"></div>
<div class="t" style="left:883px;top:139px;font-size:11.4px">Palette</div>
<svg style="left:1029px;top:138px" width="70" height="16" viewBox="0 0 70 16"><circle cx="7" cy="7" r="4.600" fill="none" stroke="#6e6e6e" stroke-width="1.600"/><path d="M10.500 10.500 L14.500 14.500" stroke="#6e6e6e" stroke-width="1.900"/><g transform="translate(34,8)"><path d="M-1.45 -4.46 L-1.14 -6.34 L1.14 -6.34 L1.45 -4.46 L3.14 -3.49 L4.92 -4.16 L6.06 -2.18 L4.59 -0.98 L4.59 0.98 L6.06 2.18 L4.92 4.16 L3.14 3.49 L1.45 4.46 L1.14 6.34 L-1.14 6.34 L-1.45 4.46 L-3.14 3.49 L-4.92 4.16 L-6.06 2.18 L-4.59 0.98 L-4.59 -0.98 L-6.06 -2.18 L-4.92 -4.16 L-3.14 -3.49 Z M2.12 0 A2.12 2.12 0 1 0 -2.12 0 A2.12 2.12 0 1 0 2.12 0 Z" fill="#6e6e6e" fill-rule="evenodd"/></g><path d="M54 8.500 H66" stroke="#6e6e6e" stroke-width="1.500"/></svg>
<div class="a" style="left:878px;top:161px;width:95px;height:24px;background:#d4d4d4"></div>
<div class="t" style="left:889px;top:165.5px;font-size:11.6px">Common</div>
<div class="t" style="left:889px;top:189.5px;font-size:11.6px">Text</div>
<div class="t" style="left:889px;top:213.5px;font-size:11.6px">Buttons</div>
<div class="t" style="left:889px;top:237.5px;font-size:11.6px">Widgets</div>
<div class="t" style="left:889px;top:261.5px;font-size:11.6px">Layouts</div>
<div class="t" style="left:889px;top:285.5px;font-size:11.6px">Containers</div>
<div class="t" style="left:889px;top:309.5px;font-size:11.6px">Helpers</div>
<div class="t" style="left:889px;top:333.5px;font-size:11.6px">Google</div>
<div class="t" style="left:889px;top:357.5px;font-size:11.6px">Legacy</div>
<div class="a" style="left:974px;top:162px;width:128px;height:20px;background:#d4d4d4"></div>
<div class="t" style="left:985px;top:164px;font-size:11.5px;color:#9a9a9a">Ab</div>
<div class="t" style="left:1003px;top:165px;font-size:11.6px">TextView</div>
<div class="a" style="left:985px;top:187px;width:14px;height:10px;background:#9aa0a8;border-radius:1.500px"></div>
<div class="t" style="left:1003px;top:185px;font-size:11.6px">Button</div>
<svg style="left:985px;top:206px" width="14" height="12" viewBox="0 0 14 12"><rect x="0" y="0" width="14" height="12" fill="#9aa0a8"/><path d="M1.500 10 L5 5.500 L7.500 8 L9.500 6.500 L12.500 10 Z" fill="#fff"/></svg>
<div class="t" style="left:1003px;top:205px;font-size:11.6px">ImageView</div>
<svg style="left:985px;top:226px" width="14" height="12" viewBox="0 0 14 12"><path d="M0 1.500 H2 M0 5.500 H2 M0 9.500 H2 M4 1.500 H14 M4 5.500 H14 M4 9.500 H14" stroke="#8f959c" stroke-width="1.300"/></svg>
<div class="t" style="left:1003px;top:225px;font-size:11.6px">RecyclerView</div>
<svg style="left:1086px;top:226px" width="11" height="12" viewBox="0 0 11 12"><path d="M3.500 0 H7.500 V4 H10 L5.500 8.500 L1 4 H3.500 Z" fill="#c4c4c4"/><path d="M.5 10.500 H10.500" stroke="#c4c4c4" stroke-width="1.500"/></svg>
<svg style="left:985px;top:247px" width="14" height="10" viewBox="0 0 14 10"><rect x="0" y="0" width="14" height="10" fill="#9aa0a8"/><rect x="10.500" y="1.500" width="2" height="5" fill="#e8e8e8"/></svg>
<div class="t" style="left:1003px;top:245px;font-size:11.6px">ScrollView</div>
<svg style="left:985px;top:268px" width="14" height="9" viewBox="0 0 14 9"><rect x="0" y="3" width="8" height="3" rx="1.500" fill="#b5bac0"/><circle cx="10" cy="4.500" r="3.800" fill="#8f959c"/></svg>
<div class="t" style="left:1003px;top:265px;font-size:11.6px">Switch</div>
<!-- design surface -->
<div class="a" style="left:1103px;top:132px;width:495px;height:28px;background:#f2f2f2"></div>
<div class="hl" style="left:1103px;top:160px;width:495px"></div>
<div class="a" style="left:1103px;top:161px;width:495px;height:28px;background:#f2f2f2"></div>
<div class="hl" style="left:1103px;top:189px;width:485px"></div>
<div class="a" id="surface" style="left:1103px;top:190px;width:485px;height:629px;background:#f6f6f8;overflow:hidden">
 <div class="a" style="left:55px;top:47px;width:385px;height:600px;background:#fafafa;border:2px solid #d9d9dc;box-shadow:0 0 2px rgba(0,0,0,.12)"></div>
 <!-- board -->
 <div class="a" style="left:183px;top:222px;width:5.600px;height:333px;background:#000"></div>
 <div class="a" style="left:310px;top:222px;width:5.800px;height:333px;background:#000"></div>
 <div class="a" style="left:57px;top:327px;width:381px;height:5.500px;background:#000"></div>
 <div class="a" style="left:57px;top:444.800px;width:381px;height:5.600px;background:#000"></div>
 <svg style="left:0;top:0" width="485" height="629" viewBox="0 0 485 629">
  <path d="M247 49 V62" stroke="#b9b9b9"/>
  <g fill="none" stroke="#b4b4b4" stroke-width=".9"><path d="M244.0 62.0 L250.0 64.8 L244.0 67.5 L250.0 70.2 L244.0 73.0 L250.0 75.8 L244.0 78.5 L250.0 81.2 L244.0 84.0 L250.0 86.8 L244.0 89.5 L250.0 92.2 L244.0 95.0 L250.0 97.8 L244.0 100.5 L250.0 103.2 L244.0 106.0 L250.0 108.8 L244.0 111.5 L250.0 114.2 L244.0 117.0 L250.0 119.8 L244.0 122.5 L250.0 125.2 L244.0 128.0 L250.0 130.8 L244.0 133.5 L250.0 136.2 L244.0 139.0 L250.0 141.8 L244.0 144.5 L250.0 147.2 L244.0 150.0 L250.0 152.8 L244.0 155.5 L250.0 158.2 L244.0 161.0 L250.0 163.8 L244.0 166.5 L250.0 169.2 L244.0 172.0 L250.0 174.8 L244.0 177.5 L250.0 180.2 L244.0 183.0 L250.0 185.8 L244.0 188.5 L250.0 191.2 L244.0 194.0 L250.0 196.8 L244.0 199.5 L250.0 202.2 L244.0 205.0 L250.0 207.8 L244.0 210.5 L250.0 213.2 L244.0 216.0 L250.0 218.8 L244.0 221.5 L250.0 224.2 L244.0 227.0 L250.0 229.8 L244.0 232.5 L250.0 235.2 L244.0 238.0 L250.0 240.8 L244.0 243.5 L250.0 246.2 L244.0 249.0 L250.0 251.8 L244.0 254.5 L250.0 257.2 L244.0 260.0 L250.0 262.8 L244.0 265.5 L250.0 268.2 L244.0 271.0 L250.0 273.8 L244.0 276.5 L250.0 279.2 L244.0 282.0 L250.0 284.8 L244.0 287.5 L250.0 290.2 L244.0 293.0 L250.0 295.8 L244.0 298.5 L250.0 301.2 L244.0 304.0 L250.0 306.8 L244.0 309.5 L250.0 312.2"/><path d="M244.0 466.0 L250.0 468.8 L244.0 471.5 L250.0 474.2 L244.0 477.0 L250.0 479.8 L244.0 482.5 L250.0 485.2 L244.0 488.0 L250.0 490.8 L244.0 493.5 L250.0 496.2 L244.0 499.0 L250.0 501.8 L244.0 504.5 L250.0 507.2 L244.0 510.0 L250.0 512.8 L244.0 515.5 L250.0 518.2 L244.0 521.0 L250.0 523.8 L244.0 526.5 L250.0 529.2 L244.0 532.0 L250.0 534.8 L244.0 537.5 L250.0 540.2 L244.0 543.0 L250.0 545.8 L244.0 548.5 L250.0 551.2 L244.0 554.0 L250.0 556.8 L244.0 559.5 L250.0 562.2 L244.0 565.0 L250.0 567.8 L244.0 570.5 L250.0 573.2 L244.0 576.0 L250.0 578.8 L244.0 581.5 L250.0 584.2 L244.0 587.0 L250.0 589.8 L244.0 592.5 L250.0 595.2 L244.0 598.0 L250.0 600.8 L244.0 603.5 L250.0 606.2 L244.0 609.0 L250.0 611.8 L244.0 614.5 L250.0 617.2 L244.0 620.0 L250.0 622.8 L244.0 625.5 L250.0 628.2"/><path d="M64.0 385.0 L66.8 391.0 L69.5 385.0 L72.2 391.0 L75.0 385.0 L77.8 391.0 L80.5 385.0 L83.2 391.0 L86.0 385.0 L88.8 391.0 L91.5 385.0 L94.2 391.0 L97.0 385.0 L99.8 391.0 L102.5 385.0 L105.2 391.0 L108.0 385.0 L110.8 391.0 L113.5 385.0 L116.2 391.0 L119.0 385.0 L121.8 391.0 L124.5 385.0 L127.2 391.0 L130.0 385.0 L132.8 391.0 L135.5 385.0 L138.2 391.0 L141.0 385.0 L143.8 391.0 L146.5 385.0 L149.2 391.0 L152.0 385.0 L154.8 391.0"/><path d="M340.0 385.0 L342.8 391.0 L345.5 385.0 L348.2 391.0 L351.0 385.0 L353.8 391.0 L356.5 385.0 L359.2 391.0 L362.0 385.0 L364.8 391.0 L367.5 385.0 L370.2 391.0 L373.0 385.0 L375.8 391.0 L378.5 385.0 L381.2 391.0 L384.0 385.0 L386.8 391.0 L389.5 385.0 L392.2 391.0 L395.0 385.0 L397.8 391.0 L400.5 385.0 L403.2 391.0 L406.0 385.0 L408.8 391.0 L411.5 385.0 L414.2 391.0 L417.0 385.0 L419.8 391.0 L422.5 385.0 L425.2 391.0 L428.0 385.0 L430.8 391.0"/></g>
  <path d="M57 388 H64 M430 388 H438" stroke="#b9b9b9"/>
  <rect x="162.500" y="319.500" width="171" height="138" fill="none" stroke="#1e88e5" stroke-width="1"/>
  <g fill="#1e88e5"><rect x="159" y="316" width="7" height="7"/><rect x="330" y="316" width="7" height="7"/><rect x="159" y="454" width="7" height="7"/><rect x="330" y="454" width="7" height="7"/>
  <circle cx="247" cy="319.500" r="6.500" stroke="#fafafa" stroke-width="1.500"/><circle cx="247" cy="457.500" r="6.500" stroke="#fafafa" stroke-width="1.500"/><circle cx="162" cy="388" r="6.500" stroke="#fafafa" stroke-width="1.500"/><circle cx="333" cy="388" r="6.500" stroke="#fafafa" stroke-width="1.500"/></g>
  <!-- wrench -->
  <g transform="translate(424,35)"><path d="M0 -1 V7.500" stroke="#5a5a5a" stroke-width="2.600" stroke-linecap="round"/><path d="M-4 -7 V-3.500 A4 4 0 0 0 4 -3.500 V-7 H1.300 V-3.500 H-1.300 V-7 Z" fill="#5a5a5a"/></g>
 </svg>
 <!-- zoom controls -->
 <div class="a" style="left:450px;top:467px;width:28px;height:28px;background:#fafafa;border:1px solid #d4d4d4;border-radius:3px"></div>
 <svg style="left:457px;top:473px" width="15" height="16" viewBox="0 0 15 16"><g fill="#6e6e6e"><rect x="3.800" y="2.500" width="2.200" height="8" rx="1.100"/><rect x="6.200" y="1" width="2.200" height="9" rx="1.100"/><rect x="8.600" y="1.500" width="2.200" height="9" rx="1.100"/><rect x="11" y="3.500" width="2.100" height="8" rx="1.050"/><path d="M3.800 8 H13.100 V11 Q13.100 15.500 8.500 15.500 Q5.500 15.500 4 13 L.8 8.800 Q1.800 7 3.800 9 Z"/></g></svg>
 <div class="a" style="left:450px;top:501px;width:28px;height:107px;background:#fafafa;border:1px solid #d4d4d4;border-radius:3px"></div>
 <svg style="left:450px;top:501px" width="28" height="107" viewBox="0 0 28 107"><path d="M8.500 14.500 H19.500 M14 9 V20 M8.500 40.500 H19.500" stroke="#6e6e6e" stroke-width="1.600"/><rect x="8.500" y="87" width="11" height="10" fill="none" stroke="#6e6e6e" stroke-width="1.200"/><path d="M10.500 91.500 V89.500 H12.500 M17.500 92.500 V94.500 H15.500" stroke="#6e6e6e" stroke-width="1" fill="none"/></svg>
 <div class="t b" style="left:457px;top:559px;font-size:9.500px;color:#6e6e6e">1:1</div>
</div>
<!-- surface scrollbar -->
<div class="a" style="left:1588px;top:190px;width:10px;height:629px;background:#f6f6f8"></div>
<div class="a" style="left:1588px;top:190px;width:9px;height:509px;background:#dadada"></div>
<!-- toolbar 1 -->
<div class="t" style="left:1113px;top:139px;font-size:12.1px">activity_main.xml</div>
<svg style="left:1103px;top:132px" width="495" height="58" viewBox="0 0 495 58">
 <g fill="none" stroke="#6e6e6e" stroke-width="1.200"><path d="M107.500 13 L111 16.500 L114.500 13"/><path d="M265 13 L268.500 16.500 L272 13"/><path d="M316 13 L319.500 16.500 L323 13"/><path d="M407.500 13 L411 16.500 L414.500 13"/></g>
 <path d="M121.500 5 V23 M150.500 5 V23 M179.500 5 V23 M208.500 5 V23 M420.500 5 V23" stroke="#d1d1d1"/>
 <!-- layers -->
 <path d="M136 6 L144.500 11.500 L136 17 L127.500 11.500 Z" fill="#389fd6"/><path d="M128 15 L136 20.500 L144 15" fill="none" stroke="#389fd6" stroke-width="1.800"/><path d="M142 21 H148 L145 24 Z" fill="#5a5a5a"/>
 <!-- orientation -->
 <circle cx="164.500" cy="13" r="7.300" fill="none" stroke="#6e6e6e" stroke-width="1.200"/><path d="M158.500 10 L168 19.500 M161 6.500 L171 16" stroke="#6e6e6e" stroke-width="1.200"/><path d="M170.500 21 H176.500 L173.500 24 Z" fill="#5a5a5a"/>
 <!-- night mode -->
 <circle cx="193.500" cy="13" r="5.800" fill="#aeb3b9"/><circle cx="195" cy="14" r="3.800" fill="#d9dbde"/><path d="M199.500 21 H205.500 L202.500 24 Z" fill="#5a5a5a"/>
 <!-- phone -->
 <rect x="225" y="7" width="7.500" height="12" rx="1.200" fill="#fff" stroke="#6e6e6e" stroke-width="1.900"/>
 <!-- android small -->
 <path d="M285.500 17.500 A6 6 0 0 1 297.500 17.500 Z" fill="#3ddc84"/><path d="M288 12.300 L286.800 10.300 M295 12.300 L296.200 10.300" stroke="#3ddc84" stroke-width="1"/>
 <!-- theme -->
 <circle cx="341.500" cy="14" r="6" fill="none" stroke="#6e6e6e" stroke-width="1.200"/><path d="M341.500 10 A4 4 0 0 0 341.500 18 Z" fill="#6e6e6e"/><circle cx="341.500" cy="14" r="4" fill="none" stroke="#6e6e6e" stroke-width="1"/>
 <!-- >> -->
 <path d="M452.500 10.500 L455.500 13.500 L452.500 16.500 M456.500 10.500 L459.500 13.500 L456.500 16.500" fill="none" stroke="#8a8a8a" stroke-width="1"/>
 <!-- error -->
 <circle cx="480" cy="14" r="6.800" fill="#e05563"/><path d="M480 9.500 V15" stroke="#fff" stroke-width="2"/><circle cx="480" cy="18" r="1.100" fill="#fff"/>
 <!-- toolbar 2 -->
 <path d="M5.500 43 Q13 34.500 20.500 43 Q13 51.500 5.500 43 Z" fill="#6e6e6e"/><circle cx="13" cy="43" r="3.400" fill="#f2f2f2"/><circle cx="13" cy="43" r="1.900" fill="#6e6e6e"/><path d="M18.500 50 H23.500 L21 52.500 Z" fill="#5a5a5a"/>
 <path d="M31 43 H43" stroke="#6e6e6e" stroke-width="1.600"/><path d="M30 43 L34 39.500 V46.500 Z M44 43 L40 39.500 V46.500 Z" fill="#6e6e6e"/>
 <path d="M63 37 V49" stroke="#6e6e6e" stroke-width="1.600"/><path d="M63 36 L59.500 40 H66.500 Z M63 50 L59.500 46 H66.500 Z" fill="#6e6e6e"/>
 <path d="M86 40.500 V44.500 A4.500 4.500 0 0 0 95 44.500 V40.500" fill="none" stroke="#6e6e6e" stroke-width="3"/><rect x="84.500" y="36.500" width="3" height="2.800" fill="#389fd6"/><rect x="93.500" y="36.500" width="3" height="2.800" fill="#389fd6"/>
 <circle cx="480" cy="43" r="6.300" fill="#389fd6"/><text x="477.300" y="47" font-family="Liberation Sans" font-weight="bold" font-size="10" fill="#fff">?</text>
</svg>
<div class="t" style="left:1339px;top:139px;font-size:11.7px">Pixel</div>
<div class="t" style="left:1402px;top:139px;font-size:11.7px">32</div>
<div class="t" style="left:1454px;top:139px;font-size:11.7px">Connect3</div>
<!-- attributes strip -->
<div class="a" style="left:1598px;top:132px;width:23px;height:687px;background:#f2f2f2"></div>
<div class="vl" style="left:1621px;top:78px;height:764px"></div>
<div class="vl" style="left:1598px;top:132px;height:687px"></div>
<svg style="left:1604px;top:144px" width="12" height="12" viewBox="0 0 12 12"><path d="M0 2.500 H12 M0 6.500 H12 M0 10.500 H12" stroke="#6e6e6e" stroke-width="1"/><path d="M8 .5 V4.500 M3.500 4.500 V8.500 M8 8.500 V12" stroke="#6e6e6e" stroke-width="1.400"/></svg>
<div class="vt" style="left:1617px;top:160px;transform:rotate(90deg);font-size:11.3px">Attributes</div>
<div class="a" style="left:878px;top:819px;width:743px;height:23px;background:#f2f2f2"></div>
<!-- emulator panel -->
<div class="a" style="left:1622px;top:78px;width:277px;height:26px;background:#f2f2f2"></div>
<div class="hl" style="left:1622px;top:104px;width:277px"></div>
<div class="a" style="left:1622px;top:105px;width:277px;height:28px;background:#f2f2f2"></div>
<div class="hl" style="left:1622px;top:133px;width:277px"></div>
<div class="a" style="left:1622px;top:134px;width:277px;height:708px;background:#f7f7f7"></div>
<div class="vl" style="left:1899px;top:78px;height:940px"></div>
<div class="t" style="left:1628px;top:84px;font-size:12px">Emulator:</div>
<svg style="left:1701px;top:84px" width="16" height="16" viewBox="0 0 16 16"><rect x="1.500" y="1.500" width="6.500" height="10.500" rx="1" fill="none" stroke="#8f8f8f" stroke-width="1.200"/><rect x="7" y="9" width="5.500" height="4" fill="#fff" stroke="#8a63c7" stroke-width="1"/><circle cx="12" cy="13" r="2.200" fill="#26c940"/></svg>
<div class="t" style="left:1718px;top:84px;font-size:11.4px">Pixel 4 XL API Q</div>
<svg style="left:1808px;top:84px" width="90" height="16" viewBox="0 0 90 16"><path d="M1.500 4.500 L8.500 11.500 M8.500 4.500 L1.500 11.500" stroke="#a8a8a8" stroke-width="1"/><path d="M21 5.500 L25.500 10 L30 5.500" fill="none" stroke="#6e6e6e" stroke-width="1.400"/><g transform="translate(51.500,7.500)"><path d="M-1.45 -4.46 L-1.14 -6.34 L1.14 -6.34 L1.45 -4.46 L3.14 -3.49 L4.92 -4.16 L6.06 -2.18 L4.59 -0.98 L4.59 0.98 L6.06 2.18 L4.92 4.16 L3.14 3.49 L1.45 4.46 L1.14 6.34 L-1.14 6.34 L-1.45 4.46 L-3.14 3.49 L-4.92 4.16 L-6.06 2.18 L-4.59 0.98 L-4.59 -0.98 L-6.06 -2.18 L-4.92 -4.16 L-3.14 -3.49 Z M2.12 0 A2.12 2.12 0 1 0 -2.12 0 A2.12 2.12 0 1 0 2.12 0 Z" fill="#6e6e6e" fill-rule="evenodd"/></g><path d="M72 7.500 H84" stroke="#6e6e6e" stroke-width="1.500"/></svg>
<div class="a" style="left:1686px;top:102px;width:135px;height:3px;background:#9da9c5"></div>
<!-- emulator toolbar, centers y=119 -->
<svg style="left:1622px;top:105px" width="277" height="26" viewBox="0 0 277 26">
 <g fill="none" stroke="#6e6e6e" stroke-width="1.700"><path d="M9.500 9.500 A5.500 5.500 0 1 0 16.500 9.500"/><path d="M13 6.500 V13.500"/></g>
 <path d="M29 11.500 H32 L36 8 V20 L32 16.500 H29 Z" fill="#6e6e6e"/><path d="M38 10.500 Q40.500 14 38 17.500 M40 8.500 Q44 14 40 19.500" fill="none" stroke="#6e6e6e" stroke-width="1.300"/>
 <path d="M51 11.500 H54 L58 8 V20 L54 16.500 H51 Z" fill="#6e6e6e"/><path d="M60 10.500 Q62.500 14 60 17.500" fill="none" stroke="#6e6e6e" stroke-width="1.300"/>
 <rect x="74" y="8.500" width="7" height="11.500" rx="1" fill="none" stroke="#6e6e6e" stroke-width="1.400"/><path d="M84 19.500 Q88.500 15 85.500 10" fill="none" stroke="#389fd6" stroke-width="1.700"/><path d="M82 8.500 H87.500 L86 12.500 Z" fill="#389fd6"/>
 <rect x="108" y="8.500" width="7" height="11.500" rx="1" fill="none" stroke="#6e6e6e" stroke-width="1.400"/><path d="M105 19.500 Q100.500 15 103.500 10" fill="none" stroke="#389fd6" stroke-width="1.700"/><path d="M107.500 8.500 H102 L103.500 12.500 Z" fill="#389fd6"/>
 <path d="M129 14 L137.500 9 V19 Z" fill="#6e6e6e"/>
 <circle cx="159" cy="14" r="4.500" fill="#6e6e6e"/>
 <rect x="180.500" y="9.500" width="9" height="9" fill="#6e6e6e"/>
 <path d="M204.500 10.500 H208 L209.500 8.500 H213.500 L215 10.500 H218.500 V20 H204.500 Z" fill="#6e6e6e"/><circle cx="211.500" cy="15" r="2.600" fill="#f2f2f2"/>
 <g fill="none" stroke="#6e6e6e" stroke-width="1.600"><path d="M232 11 A6 6 0 1 1 232 17.500"/><path d="M237.500 11 V14.500 H240.500" stroke-width="1.300"/></g><path d="M229 9 L234 10 L230.500 13.500 Z" fill="#6e6e6e"/>
 <path d="M264.500 11 L267.500 14 L264.500 17 M268.500 11 L271.500 14 L268.500 17" fill="none" stroke="#8a8a8a" stroke-width="1"/>
</svg>
<!-- phone screen -->
<div class="a" style="left:1622px;top:196px;width:277px;height:16px;background:#3700b3"></div>
<div class="a" style="left:1622px;top:212px;width:277px;height:38px;background:#6200ee"></div>
<div class="a" style="left:1622px;top:250px;width:277px;height:498px;background:#fafafa"></div>
<div class="a" style="left:1622px;top:748px;width:277px;height:32px;background:#000"></div>
<div class="t b" style="left:1632px;top:197px;font-size:8.800px;color:#fff;line-height:14px">3:50</div>
<svg style="left:1622px;top:196px" width="277" height="16" viewBox="0 0 277 16">
 <g transform="translate(40.800,8.300)"><path d="M-1.04 -3.20 L-0.82 -4.55 L0.82 -4.55 L1.04 -3.20 L2.25 -2.50 L3.53 -2.98 L4.35 -1.56 L3.29 -0.70 L3.29 0.70 L4.35 1.56 L3.53 2.98 L2.25 2.50 L1.04 3.20 L0.82 4.55 L-0.82 4.55 L-1.04 3.20 L-2.25 2.50 L-3.53 2.98 L-4.35 1.56 L-3.29 0.70 L-3.29 -0.70 L-4.35 -1.56 L-3.53 -2.98 L-2.25 -2.50 Z M1.52 0 A1.52 1.52 0 1 0 -1.52 0 A1.52 1.52 0 1 0 1.52 0 Z" fill="#fff" fill-rule="evenodd"/></g>
 <path d="M52 6.500 L54.500 4 H59 V12 H52 Z" fill="#fff"/>
 <path d="M237 6.500 Q242 2.500 247 6.500 L242 12.500 Z" fill="#fff"/>
 <path d="M248.500 12 L255 5 V12 Z" fill="#fff" opacity=".55"/><path d="M248.500 12 L252 8.200 V12 Z" fill="#fff"/>
 <rect x="261.500" y="4.500" width="5.500" height="8" rx=".8" fill="#fff"/>
</svg>
<div class="t b" style="left:1633px;top:224px;font-size:12.8px;color:#fff;letter-spacing:-.1px">Connect3</div>
<div class="a" style="left:1714.500px;top:378px;width:3px;height:242px;background:#000"></div>
<div class="a" style="left:1807px;top:378px;width:3px;height:242px;background:#000"></div>
<div class="a" style="left:1622px;top:455px;width:277px;height:3px;background:#000"></div>
<div class="a" style="left:1622px;top:540.500px;width:277px;height:3px;background:#000"></div>
<svg style="left:1622px;top:748px" width="277" height="32" viewBox="0 0 277 32"><path d="M56 16 L66 10.500 V21.500 Z" fill="#fff"/><circle cx="138.500" cy="16" r="4.800" fill="#fff"/><rect x="210" y="11.500" width="9.500" height="9.500" fill="#fff"/></svg>
<!-- emulator zoom box -->
<div class="a" style="left:1855px;top:714px;width:26px;height:106px;background:#fafafa;border:1px solid #d4d4d4;border-radius:3px"></div>
<svg style="left:1855px;top:714px" width="26" height="106" viewBox="0 0 26 106"><path d="M7.500 13.500 H18.500 M13 8 V19" stroke="#6e6e6e" stroke-width="1.600"/><path d="M7.500 39.500 H18.500" stroke="#c4c4c4" stroke-width="1.600"/><rect x="7.500" y="86" width="11" height="10" fill="none" stroke="#c4c4c4" stroke-width="1.200"/><path d="M9.500 90.500 V88.500 H11.500 M16.500 91.500 V93.500 H14.500" stroke="#c4c4c4" stroke-width="1" fill="none"/></svg>
<div class="t b" style="left:1861px;top:771px;font-size:9.500px;color:#6e6e6e">1:1</div>
<!-- right strip -->
<div class="a" style="left:1900px;top:78px;width:20px;height:940px;background:#f2f2f2"></div>
<svg style="left:1902px;top:88px" width="16" height="12" viewBox="6 7 16 12"><path d="M6.500 18 Q6.200 13 8.500 11.500 Q10 9.500 13 9.300 Q16 9.200 17.500 11 Q19.500 11.500 20 9.500 Q20.300 8 19 7.800 Q17.800 8 17.300 8.300 Q18 7 19.500 7 Q21.800 7.200 21.300 10 Q20.800 13 18 14.500 Q16.500 15 15 13.500 Q14 12.800 13.700 14 L13.800 17 Q13.500 18.200 12 18 L11.800 16.500 Q10 15.800 8.800 17 Q8 18.500 6.500 18 Z" fill="#6e6e6e"/></svg>
<div class="vt" style="left:1918px;top:105px;transform:rotate(90deg);font-size:11.3px">Gradle</div>
<svg style="left:1903px;top:161.500px" width="13" height="13" viewBox="0 0 13 13"><rect x="1" y="1" width="8" height="9" rx="1" fill="none" stroke="#6e6e6e" stroke-width="1.200"/><rect x="6" y="4" width="6" height="8" rx="1" fill="#f2f2f2" stroke="#6e6e6e" stroke-width="1.200"/></svg>
<div class="vt" style="left:1918px;top:178.500px;transform:rotate(90deg);font-size:11.3px">Layout Validation</div>
<svg style="left:1903px;top:292px" width="13" height="13" viewBox="0 0 13 13"><rect x="1" y="1" width="8" height="9" rx="1" fill="none" stroke="#6e6e6e" stroke-width="1.200"/><rect x="6" y="4" width="6" height="8" rx="1" fill="#f2f2f2" stroke="#6e6e6e" stroke-width="1.200"/></svg>
<div class="vt" style="left:1918px;top:309px;transform:rotate(90deg);font-size:11.3px">Device Manager</div>
<svg style="left:1904px;top:800px" width="10" height="13" viewBox="0 0 10 13"><rect x="1.500" y="1" width="7" height="11" rx="1" fill="none" stroke="#6e6e6e" stroke-width="1.300"/></svg>
<div class="vt" style="left:1918px;top:817px;transform:rotate(90deg);font-size:11.3px">Device File Explorer</div>
<div class="a" style="left:1900px;top:933px;width:20px;height:84px;background:#bdbdbd"></div>
<svg style="left:1903px;top:944px" width="14" height="14" viewBox="0 0 14 14"><rect x="1" y="1" width="6" height="9" rx="1" fill="none" stroke="#6e6e6e" stroke-width="1.200"/><rect x="6" y="8" width="5" height="3.500" fill="#f2f2f2" stroke="#8a63c7" stroke-width="1"/><circle cx="11" cy="11.500" r="2" fill="#26c940"/></svg>
<div class="vt" style="left:1918px;top:961px;transform:rotate(90deg);font-size:11.3px">Emulator</div>
<!-- logcat -->
<div class="a" style="left:22px;top:843px;width:1877px;height:26px;background:#f2f2f2"></div>
<div class="hl" style="left:22px;top:869px;width:1877px"></div>
<div class="a" style="left:22px;top:870px;width:1877px;height:147px;background:#f2f2f2"></div>
<div class="t" style="left:28px;top:849px;font-size:12px">Logcat</div>
<svg style="left:1852px;top:848px" width="42" height="16" viewBox="0 0 42 16"><g transform="translate(8,8)"><path d="M-1.45 -4.46 L-1.14 -6.34 L1.14 -6.34 L1.45 -4.46 L3.14 -3.49 L4.92 -4.16 L6.06 -2.18 L4.59 -0.98 L4.59 0.98 L6.06 2.18 L4.92 4.16 L3.14 3.49 L1.45 4.46 L1.14 6.34 L-1.14 6.34 L-1.45 4.46 L-3.14 3.49 L-4.92 4.16 L-6.06 2.18 L-4.59 0.98 L-4.59 -0.98 L-6.06 -2.18 L-4.92 -4.16 L-3.14 -3.49 Z M2.12 0 A2.12 2.12 0 1 0 -2.12 0 A2.12 2.12 0 1 0 2.12 0 Z" fill="#6e6e6e" fill-rule="evenodd"/></g><path d="M28 8.500 H40" stroke="#6e6e6e" stroke-width="1.500"/></svg>
<div class="combo" style="left:31px;top:879px;width:219px;height:24px"></div>
<svg style="left:40px;top:884px" width="14" height="14" viewBox="0 0 14 14"><rect x="1" y="1" width="6.500" height="10.500" rx="1" fill="none" stroke="#8f8f8f" stroke-width="1.200"/><rect x="6.500" y="8" width="6" height="4" fill="#fff" stroke="#8a63c7" stroke-width="1"/><path d="M6 13.500 H13" stroke="#8a63c7" stroke-width="1"/></svg>
<div class="t" style="left:56px;top:883px;font-size:11.1px">Emulator Pixel_4_XL_API_Q <span class="g">Andr</span></div>
<div class="tri" style="left:234px;top:889px"></div>
<div class="combo" style="left:262px;top:879px;width:219px;height:24px"></div>
<div class="t" style="left:269px;top:883px;font-size:11.8px">com.brainmatics.<b style="letter-spacing:-.3px">connect3</b> <span class="g">(9860)</span></div>
<div class="tri" style="left:465px;top:889px"></div>
<div class="combo" style="left:499px;top:879px;width:82px;height:24px"></div>
<div class="t" style="left:505px;top:883px;font-size:11.5px">Verbose</div>
<div class="tri" style="left:565px;top:889px"></div>
<div class="combo" style="left:593px;top:879px;width:996px;height:24px"></div>
<svg style="left:599px;top:884px" width="16" height="14" viewBox="0 0 16 14"><circle cx="5.500" cy="5.500" r="4" fill="none" stroke="#8f8f8f" stroke-width="1.300"/><path d="M8.500 8.500 L12 12" stroke="#8f8f8f" stroke-width="1.500"/><path d="M11.500 6 H15.500 L13.500 8.500 Z" fill="#8f8f8f"/></svg>
<div class="a" style="left:1601px;top:883px;width:14px;height:14px;background:#3b8ce8;border-radius:2px"></div>
<svg style="left:1601px;top:883px" width="14" height="14" viewBox="0 0 14 14"><path d="M3.300 7.200 L6 10 L10.800 4" fill="none" stroke="#fff" stroke-width="1.800"/></svg>
<div class="t" style="left:1621px;top:883px;font-size:11.3px">Regex</div>
<div class="combo" style="left:1671px;top:879px;width:219px;height:24px"></div>
<div class="t" style="left:1678px;top:883px;font-size:11.8px">Show only selected application</div>
<div class="tri" style="left:1874px;top:889px"></div>
<!-- log side toolbar -->
<div class="a" style="left:25px;top:942px;width:22px;height:22px;background:#d4d4d4;border-radius:3px"></div>
<svg style="left:22px;top:912px" width="28" height="105" viewBox="0 0 28 105">
 <path d="M9.500 11.500 H18.500 V21 H9.500 Z M8.500 9 H19.500 V11 H8.500 Z M12 7.500 H16 V9 H12 Z" fill="#6e6e6e"/>
 <path d="M8 38 H12 M8 42 H12" stroke="#6e6e6e" stroke-width="1.400"/><path d="M17 35 V42 M14 39.500 L17 42.500 L20 39.500" fill="none" stroke="#6e6e6e" stroke-width="1.400"/><path d="M8 46 H20" stroke="#6e6e6e" stroke-width="1.500"/>
 <path d="M14 73 V62 M9.500 66.500 L14 62 L18.500 66.500" fill="none" stroke="#6e6e6e" stroke-width="1.500"/>
 <path d="M11 92 L14 95 L11 98 M15 92 L18 95 L15 98" fill="none" stroke="#8a8a8a" stroke-width="1"/>
</svg>
<!-- log text -->
<div class="a" style="left:50px;top:912px;width:1849px;height:105px;background:#fff;overflow:hidden">
 <div class="t mono" style="left:12px;top:6.500px;font-size:13.33px;color:#111;-webkit-text-stroke:.2px">2022-08-24 11:45:43.335 9860-9860/com.brainmatics.connect3 D/android.support.v7.widget.GridLayout: vertical constraints: y3-y0&gt;=1260, y3-y2&lt;=420, y2-y1&lt;=420, y1-y0&lt;=350 are inconsistent; permanently removing: y3-y2&lt;=420.</div>
 <div class="t mono" style="left:12px;top:28.500px;font-size:13.33px;color:#111;-webkit-text-stroke:.2px">2022-08-24 11:45:45.123 9860-9860/com.brainmatics.connect3 D/android.support.v7.widget.GridLayout: horizontal constraints: x3-x0&gt;=1440, x3-x2&lt;=473, x2-x1&lt;=473, x1-x0&lt;=420 are inconsistent; permanently removing: x3-x2&lt;=473.</div>
 <div class="t mono" style="left:12px;top:50.500px;font-size:13.33px;color:#111;-webkit-text-stroke:.2px">2022-08-24 11:45:45.128 9860-9860/com.brainmatics.connect3 D/android.support.v7.widget.GridLayout: vertical constraints: y3-y0&gt;=1260, y3-y2&lt;=420, y2-y1&lt;=420, y1-y0&lt;=350 are inconsistent; permanently removing: y3-y2&lt;=420.</div>
 <div class="a" style="left:12px;top:95px;width:1480px;height:10px;background:#e0e0e0"></div>
 <div class="a" style="left:1839px;top:77px;width:10px;height:28px;background:#e6e6e6"></div>
</div>
<!-- bottom tool window bar -->
<div class="hl" style="left:0;top:1017px;width:1920px"></div>
<div class="a" style="left:0;top:1018px;width:1920px;height:22px;background:#f2f2f2"></div>
<div class="hl" style="left:0;top:1040px;width:1920px"></div>
<div class="a" style="left:0;top:1041px;width:1920px;height:19px;background:#f2f2f2"></div>
<div class="a" style="left:0;top:1060px;width:1920px;height:20px;background:#1b1b1b"></div>
<svg style="left:33px;top:1022px" width="12" height="15" viewBox="0 0 12 15"><path d="M3 2 V13" stroke="#6e6e6e" stroke-width="1.500"/><path d="M3 10 Q9 9 9 4" fill="none" stroke="#6e6e6e" stroke-width="1.400"/><circle cx="3" cy="2.500" r="1.600" fill="#6e6e6e"/><circle cx="9" cy="3.500" r="1.600" fill="#6e6e6e"/><circle cx="3" cy="12.500" r="1.600" fill="#6e6e6e"/></svg>
<div class="t" style="left:50px;top:1021.500px;font-size:11.8px">Version Control</div>
<svg style="left:153px;top:1023px" width="14" height="14" viewBox="0 0 14 14"><path d="M1.500 1 L10 6 L1.500 11 Z" fill="#6e6e6e"/><circle cx="10.500" cy="11" r="2.200" fill="#26c940"/></svg>
<div class="t" style="left:170px;top:1021.500px;font-size:11.8px">Run</div>
<svg style="left:211px;top:1024px" width="12" height="10" viewBox="0 0 12 10"><path d="M0 1 H2 M0 5 H2 M0 9 H2 M4 1 H11 M4 5 H11 M4 9 H11" stroke="#6e6e6e" stroke-width="1.500"/></svg>
<div class="t" style="left:226px;top:1021.500px;font-size:11.8px">TODO</div>
<svg style="left:279px;top:1022px" width="12" height="12" viewBox="0 0 12 12"><circle cx="6" cy="6" r="5.300" fill="#6e6e6e"/><path d="M6 2.800 V6.800" stroke="#f2f2f2" stroke-width="1.600"/><circle cx="6" cy="8.800" r=".9" fill="#f2f2f2"/></svg>
<div class="t" style="left:295px;top:1021.500px;font-size:11.8px">Problems</div>
<svg style="left:1694px;top:1022px" width="14" height="14" viewBox="0 0 14 14"><path d="M3 12.500 H7 A5.500 5.500 0 1 0 1.500 7 V12.500 Z" fill="none" stroke="#6e6e6e" stroke-width="1.200"/></svg>
<div class="t" style="left:1712px;top:1021.500px;font-size:11.2px">Event Log</div>
<svg style="left:1784px;top:1022px" width="15" height="13" viewBox="0 0 15 13"><path d="M.5 6 V.5 H8" fill="none" stroke="#8f8f8f" stroke-width="1"/><path d="M2.500 8 V2.500 H11.500 V5" fill="none" stroke="#6e6e6e" stroke-width="1.200"/><circle cx="8.500" cy="7.500" r="2.800" fill="none" stroke="#6e6e6e" stroke-width="1.200"/><path d="M10.500 9.500 L13.500 12.500" stroke="#6e6e6e" stroke-width="1.400"/></svg>
<div class="t" style="left:1802px;top:1021.500px;font-size:11.5px">Layout Inspector</div>
<!-- status bar -->
<svg style="left:6px;top:1044px" width="13" height="13" viewBox="0 0 13 13"><rect x="3" y=".5" width="9.500" height="9.500" fill="none" stroke="#6e6e6e" stroke-width="1"/><path d="M.5 3 V12.500 H10" fill="none" stroke="#6e6e6e" stroke-width="1"/></svg>
<div class="t" style="left:27px;top:1042px;font-size:11.8px">Launch succeeded (5 minutes ago)</div>
<div class="t" style="left:1671px;top:1042px;font-size:11.2px">9 line breaks)</div>
<div class="t" style="left:1750px;top:1042px;font-size:11.8px">LF</div>
<div class="t g" style="left:1774px;top:1042px;font-size:11.4px;color:#a6a6a6">UTF-8</div>
<div class="t" style="left:1817px;top:1042px;font-size:11px">4 spaces</div>
<svg style="left:1872px;top:1043px" width="14" height="14" viewBox="0 0 14 14"><rect x="4.500" y="6.500" width="8" height="6.500" fill="#6e6e6e"/><path d="M6.500 6.500 V4 A2.500 2.500 0 0 0 1.500 4 V5.500" fill="none" stroke="#6e6e6e" stroke-width="1.400"/></svg>
<svg style="left:1896px;top:1043px" width="14" height="14" viewBox="0 0 14 14"><path d="M1 1.500 H13 V10 H10 V13 L7 10 H1 Z" fill="#6e6e6e"/><path d="M7 3.500 V6.500" stroke="#f2f2f2" stroke-width="1.500"/><circle cx="7" cy="8.300" r=".8" fill="#f2f2f2"/></svg>
<!-- zoom video strip -->
<div class="a" style="left:312px;top:949px;width:1360px;height:131px;background:#212121"></div>
<div class="a" id="vstrip" style="left:313px;top:950px;width:1359px;height:130px;background:#212121;overflow:hidden">
<svg style="left:0;top:0" width="1359" height="130" viewBox="313 950 1359 130">
<defs>
 <filter id="b1" x="-10%" y="-10%" width="120%" height="120%"><feGaussianBlur stdDeviation="1.100"/></filter>
 <filter id="b2" x="-10%" y="-10%" width="120%" height="120%"><feGaussianBlur stdDeviation="2.500"/></filter>
 <filter id="b05"><feGaussianBlur stdDeviation=".6"/></filter>
 <linearGradient id="w1" x1="0" y1="0" x2="1" y2="0"><stop offset="0" stop-color="#a8743a"/><stop offset=".35" stop-color="#b9864a"/><stop offset="1" stop-color="#b07c40"/></linearGradient>
 <linearGradient id="w1v" x1="0" y1="0" x2="0" y2="1"><stop offset="0" stop-color="#6e4a22" stop-opacity=".55"/><stop offset=".3" stop-color="#6e4a22" stop-opacity="0"/><stop offset=".8" stop-color="#3a2210" stop-opacity="0"/><stop offset="1" stop-color="#3a2210" stop-opacity=".5"/></linearGradient>
 <radialGradient id="f1" cx=".62" cy=".45" r=".65"><stop offset="0" stop-color="#b8937c"/><stop offset=".55" stop-color="#987662"/><stop offset="1" stop-color="#5c4436"/></radialGradient>
 <linearGradient id="w2" x1="0" y1="0" x2="1" y2="0"><stop offset="0" stop-color="#4a3a2a"/><stop offset=".25" stop-color="#6e6a52"/><stop offset=".42" stop-color="#a88452"/><stop offset=".75" stop-color="#c08e54"/><stop offset="1" stop-color="#a87840"/></linearGradient>
 <radialGradient id="f2" cx=".5" cy=".28" r=".7"><stop offset="0" stop-color="#bf9774"/><stop offset=".55" stop-color="#946c52"/><stop offset="1" stop-color="#523628"/></radialGradient>
 <radialGradient id="w5" cx=".5" cy=".5" r=".72"><stop offset="0" stop-color="#c9a684"/><stop offset=".5" stop-color="#b8946f"/><stop offset="1" stop-color="#6a4e38"/></radialGradient>
 <radialGradient id="f5" cx=".5" cy=".45" r=".65"><stop offset="0" stop-color="#c89e82"/><stop offset=".65" stop-color="#ae8468"/><stop offset="1" stop-color="#765440"/></radialGradient>
 <clipPath id="c1"><rect x="315" y="952" width="224" height="126"/></clipPath>
 <clipPath id="c2"><rect x="541" y="952" width="224" height="126"/></clipPath>
 <clipPath id="c3"><rect x="839" y="975" width="80" height="80"/></clipPath>
 <clipPath id="c5"><rect x="1219" y="952" width="224" height="126"/></clipPath>
</defs>
<!-- TILE 1 -->
<g clip-path="url(#c1)">
 <rect x="315" y="952" width="224" height="126" fill="#9c6e3a"/>
 <g filter="url(#b2)">
  <path d="M315 952 H400 V992 Q350 1004 315 1004 Z" fill="#5e3e1e"/>
  <path d="M315 1004 Q350 1002 400 990 V1045 H315 Z" fill="#ac7a40"/>
  <path d="M315 1022 H390 V1045 H315 Z" fill="#8a5e30"/>
  <path d="M440 952 H539 V978 L480 992 Z" fill="#ad8a5e"/>
  <path d="M480 990 L539 976 V1030 H480 Z" fill="#aa7a40"/>
 </g>
 <g filter="url(#b1)">
 <path d="M467 953 L480 952 L483 958 L470 959 Z M489 972 L498 970 L501 976 L492 978 Z" fill="#fffdf0"/>
 <path d="M508 980 L535 976 V984 L509 987 Z" fill="#cdbfa8"/>
 <!-- furniture right -->
 <path d="M478 1028 L539 1026 V1078 H478 Z" fill="#2c1e14"/>
 <path d="M480 1030 L506 1028 L508 1066 L482 1070 Z" fill="#241810"/>
 <path d="M508 1028 L539 1027 V1046 L510 1048 Z" fill="#1e140e"/>
 <path d="M526 1043 L539 1042 V1078 L528 1078 Z" fill="#1c120c"/>
 <path d="M468 1052 L498 1046 L526 1050 L528 1078 H466 Z" fill="#6e4c2c"/>
 <path d="M478 1036 L500 1034 L502 1062 L480 1066 Z" fill="#241810"/>
 <path d="M524 1046 L539 1044 V1052 L525 1053 Z" fill="#5a3a20"/>
 <!-- table left -->
 <path d="M315 1041 L392 1046 V1078 H315 Z" fill="#3a2616"/>
 <path d="M372 1050 L396 1052 V1060 L372 1058 Z" fill="#5a3c22"/>
 <!-- clock -->
 <circle cx="521" cy="1002" r="1.600" fill="#20150e"/><path d="M512 1008 L521 1002 L527 994" stroke="#2a1c10" stroke-width=".8" fill="none"/>
 <g fill="#2a1c10"><circle cx="513" cy="991" r="1"/><circle cx="531" cy="990" r="1"/><circle cx="536" cy="1003" r="1"/><circle cx="530" cy="1014" r="1"/><circle cx="514" cy="1013" r="1"/><circle cx="509" cy="1002" r="1"/></g>
 <!-- sign -->
 <path d="M376 959 L396 963 V974 L376 970 Z" fill="#1c1c1a"/><path d="M379 964 L392 966.500" stroke="#d8d8d0" stroke-width="2.600"/>
 <!-- teddy & books -->
 <ellipse cx="337" cy="1036" rx="8" ry="6.500" fill="#d4cdbb"/><ellipse cx="334" cy="1050" rx="12" ry="9" fill="#d0c9b6"/><path d="M329 1029 L345 1028 L346 1034 L330 1035 Z" fill="#1c1c1a"/><path d="M328 1046 L342 1044 L341 1054 L330 1055 Z" fill="#20201e"/>
 <rect x="347" y="1025" width="4.500" height="33" fill="#3a6aa8"/><rect x="351.500" y="1024" width="3" height="34" fill="#e6e2d6"/><rect x="354.500" y="1030" width="4" height="28" fill="#4a7ab8"/><rect x="358.500" y="1030" width="10" height="27" fill="#e4e2dc"/><rect x="369" y="1033" width="9" height="22" fill="#221e1a"/>
 <rect x="353" y="1052" width="28" height="6.500" fill="#1c1a18"/>
 </g>
 <g filter="url(#b1)">
 <!-- ears -->
 <ellipse cx="386" cy="1028" rx="4.500" ry="11" fill="#94705e"/><ellipse cx="478" cy="1030" rx="4" ry="11" fill="#94705e"/>
 <!-- face -->
 <path d="M388 1000 Q390 985 432 985 Q478 985 478 1002 V1040 Q474 1066 452 1080 H410 Q392 1066 390 1040 Z" fill="url(#f1)"/>
 <!-- hair -->
 <path d="M384 1030 Q376 978 400 960 Q430 946 462 958 Q490 972 482 1032 Q479 1034 477 1020 Q474 1000 462 996 Q440 992 420 1002 Q402 1008 396 1014 Q393 1024 390 1034 Z" fill="#181b1c"/>
 <!-- brows/eyes -->
 <path d="M400 1012 Q412 1007 424 1014 L423 1017 Q412 1012 400 1015 Z M448 1014 Q460 1007 472 1011 L472 1014 Q460 1011 449 1017 Z" fill="#2a1c18"/>
 <path d="M403 1021 Q412 1018 423 1024 M450 1024 Q459 1019 469 1021" stroke="#30201c" stroke-width="2.200" fill="none"/>
 <path d="M424 1044 Q436 1052 448 1044" stroke="#8e6452" stroke-width="2.500" fill="none"/>
 <path d="M434 1066 Q444 1062 456 1068" stroke="#9a5e56" stroke-width="2.500" fill="none"/>
 </g>
</g>
<!-- TILE 2 -->
<g clip-path="url(#c2)">
 <rect x="541" y="952" width="224" height="126" fill="#b98a50"/>
 <g filter="url(#b2)">
  <path d="M560 952 H700 L680 988 H578 Z" fill="#5c5246"/>
  <path d="M556 952 H578 L580 1060 H556 Z" fill="#4e5242"/>
  <path d="M556 1020 H578 V1056 H556 Z" fill="#6a7a60"/>
  <path d="M578 988 H620 V1045 H578 Z" fill="#a87a42"/>
  <path d="M686 952 H765 V1078 H686 Z" fill="#b88440"/>
  <path d="M696 960 H720 V985 H696 Z" fill="#d6a862"/>
 </g>
 <g filter="url(#b1)">
 <path d="M584 954 L630 959 L630 963 L584 958 Z M592 978 L619 980.500 L619 983.500 L592 981 Z" fill="#f6f3d6"/>
 <path d="M541 952 H561 V1060 H541 Z" fill="#2e1a10"/><path d="M543 968 L556 974 V1056 H543 Z" fill="#2a1a12"/><path d="M556 952 L561 952 V1058 H556 Z" fill="#4e2a16"/>
 <path d="M556 1042 L617 1040 V1060 H556 Z" fill="#1a1612"/>
 <path d="M541 1058 H620 V1078 H541 Z" fill="#362a20"/>
 <g fill="#2a1c10"><circle cx="598" cy="998" r="1"/><circle cx="607" cy="996" r="1"/><circle cx="596" cy="1005" r="1"/><circle cx="609" cy="1005" r="1.200"/><circle cx="598" cy="1010" r="1"/><circle cx="602" cy="1014" r="1"/></g>
 <!-- logo sign -->
 <path d="M689 986 L743 954 L744 976 L692 1001 Z" fill="#e4e2dc"/><path d="M692 992 L741 965" stroke="#2a2622" stroke-width="6" stroke-dasharray="3.500 1.300"/>
 <path d="M692 1004 L724 993" stroke="#3a5a2a" stroke-width="1.600"/>
 <!-- cylinders -->
 <g fill="#15110e"><rect x="732" y="995" width="8.500" height="25"/><rect x="726" y="1021" width="8.500" height="26"/><rect x="741" y="1021" width="8.500" height="26"/><rect x="720" y="1047" width="8.500" height="30"/><rect x="734" y="1047" width="8.500" height="30"/><rect x="749" y="1047" width="8.500" height="30"/></g>
 <path d="M680 1052 L722 1064 V1070 L680 1060 Z" fill="#6a4626"/>
 </g>
 <g filter="url(#b1)">
 <path d="M612 1078 Q616 1066 630 1062 H690 Q716 1068 726 1078 Z" fill="#242426"/>
 <ellipse cx="612" cy="1030" rx="4" ry="11" fill="#6e4e3a"/><ellipse cx="690" cy="1034" rx="3.500" ry="10" fill="#5a3e2e"/>
 <path d="M614 1010 Q614 984 652 982 Q690 984 689 1012 V1044 Q686 1068 668 1080 H636 Q618 1066 615 1044 Z" fill="url(#f2)"/>
 <path d="M611 1026 Q606 986 630 970 Q652 960 676 970 Q698 986 692 1030 Q689 1006 680 996 Q666 984 646 986 Q626 990 620 1006 Q616 1016 614 1030 Z" fill="#1e1a18"/>
 <path d="M620 1022 H650 V1036 H620 Z M656 1024 H688 V1038 H656 Z" fill="none" stroke="#3a322c" stroke-width="1.200"/>
 <path d="M626 1016 Q636 1012 648 1017 M660 1018 Q672 1013 684 1017" stroke="#2e221c" stroke-width="2" fill="none"/>
 <path d="M628 1028 Q636 1025 646 1029 M661 1030 Q670 1026 680 1029" stroke="#2e221c" stroke-width="2" fill="none"/>
 <path d="M640 1048 Q652 1056 664 1048" stroke="#6e4a3a" stroke-width="2.500" fill="none"/>
 <path d="M634 1060 Q652 1052 670 1060 Q652 1066 634 1060 Z" fill="#4a3026"/>
 </g>
</g>
<!-- TILE 3 active speaker -->
<rect x="766.500" y="951.500" width="225" height="127" fill="#222" stroke="#86b817" stroke-width="1"/>
<g clip-path="url(#c3)">
 <rect x="839" y="975" width="80" height="80" fill="#fdf5c8"/>
 <g filter="url(#b05)">
 <path d="M839 1055 Q846 1032 866 1026 L872 1020 H892 L896 1026 Q916 1032 919 1046 V1055 Z" fill="#1c1a18"/>
 <path d="M866 1024 Q878 1042 880 1042 Q884 1038 894 1022 L890 1012 H870 Z" fill="#c48a5c"/>
 <ellipse cx="877" cy="1003" rx="17" ry="20" fill="#bd8152"/>
 <path d="M858 1006 Q854 980 876 976 Q898 978 896 1006 Q894 992 886 988 Q872 986 864 992 Q860 998 858 1006 Z" fill="#38200f"/>
 <path d="M862 1000 H874 V1006 H862 Z M879 1000 H892 V1006 H879 Z" fill="none" stroke="#5a4a3a" stroke-width=".8"/>
 <path d="M870 1017 Q877 1020 884 1016" stroke="#9a5a48" stroke-width="1.500" fill="none"/>
 </g>
</g>
<!-- TILE 4 -->
<text x="1105.500" y="1019.700" text-anchor="middle" font-family="Liberation Sans" font-weight="bold" font-size="15" fill="#fff">Ilham Mulia</text>
<!-- TILE 5 -->
<g clip-path="url(#c5)">
 <rect x="1219" y="952" width="224" height="126" fill="url(#w5)"/>
 <g filter="url(#b1)">
 
 <rect x="1294" y="960" width="67" height="13" fill="#1c1c1c"/><path d="M1297 966.500 H1324" stroke="#e8e8e8" stroke-width="6" stroke-dasharray="4 1.200"/><rect x="1326" y="961.500" width="34" height="10" fill="#e0e0e0"/>
 <rect x="1219" y="1066" width="224" height="12" fill="#3a2418"/>
 <!-- left items -->
 <ellipse cx="1237" cy="1048" rx="8" ry="8" fill="#d8d0c2"/><ellipse cx="1237" cy="1062" rx="10" ry="8" fill="#cfc6b6"/><path d="M1229 1042 L1245 1040 L1246 1045 L1230 1046 Z" fill="#222"/>
 <rect x="1246" y="1036" width="5" height="32" fill="#3a4a7a"/><rect x="1251" y="1038" width="4" height="30" fill="#d8d8d8"/><rect x="1255" y="1040" width="4" height="28" fill="#4a5a8a"/><rect x="1259" y="1041" width="8" height="27" fill="#e2e0da"/><rect x="1267" y="1043" width="7" height="24" fill="#2a2622"/>
 <!-- right items -->
 <rect x="1393" y="1037" width="6" height="30" fill="#3a3a5a"/><rect x="1399" y="1039" width="4" height="28" fill="#5a5a7a"/>
 <ellipse cx="1411" cy="1039" rx="7" ry="6.500" fill="#d8d0c2"/><ellipse cx="1412" cy="1053" rx="9" ry="9" fill="#cfc6b6"/><path d="M1404 1034 L1418 1033 L1419 1038 L1405 1039 Z" fill="#222"/><rect x="1404" y="1050" width="16" height="6" fill="#2a2a2a"/>
 <rect x="1422" y="1036" width="5" height="32" fill="#e6e4de"/><rect x="1427" y="1037" width="4" height="31" fill="#d0cec8"/><rect x="1431" y="1035" width="4" height="33" fill="#e8e6e0"/><rect x="1435" y="1037" width="4" height="31" fill="#5a4a6a"/>
 <rect x="1415" y="1060" width="12" height="7" fill="#c8322a"/>
 </g>
 <g filter="url(#b1)">
 <path d="M1262 1078 Q1270 1050 1300 1042 L1316 1036 H1370 L1384 1042 Q1410 1052 1424 1078 Z" fill="#a8c2e4"/>
 <path d="M1316 1040 L1340 1070 L1366 1040 Z" fill="#c4906e"/>
 <path d="M1310 1018 Q1308 990 1340 988 Q1372 990 1372 1018 V1036 Q1368 1062 1350 1066 H1332 Q1314 1060 1310 1036 Z" fill="url(#f5)"/>
 <path d="M1308 1028 Q1296 985 1318 968 Q1340 956 1362 968 Q1384 986 1372 1028 Q1370 1008 1362 1000 Q1340 992 1320 1002 Q1312 1012 1310 1030 Z" fill="#15161a"/>
 <path d="M1318 1024 Q1328 1027 1336 1024 M1346 1024 Q1354 1027 1364 1023" stroke="#2a1c18" stroke-width="1.800" fill="none"/>
 <path d="M1334 1042 Q1340 1046 1348 1042" stroke="#9a6a54" stroke-width="2.200" fill="none"/>
 <path d="M1328 1054 Q1340 1048 1354 1054 Q1352 1062 1340 1063 Q1330 1062 1328 1054 Z" fill="#3a2a24" opacity=".85"/>
 <path d="M1334 1056 Q1341 1054 1348 1056" stroke="#a86a60" stroke-width="1.500" fill="none"/>
 </g>
</g>
<!-- TILE 6 -->
<rect x="1517" y="975" width="80" height="80" fill="#000"/>
<rect x="1554.500" y="1008" width="41.500" height="14.500" fill="#fff"/>
<text x="1519" y="1021" font-family="Liberation Serif" font-size="15" fill="#fff" textLength="12" lengthAdjust="spacingAndGlyphs">B</text>
<text x="1528.500" y="1021" font-family="Liberation Sans" font-size="10.500" fill="#fff" textLength="25.500" lengthAdjust="spacingAndGlyphs">RAIN</text>
<text x="1555.500" y="1021" font-family="Liberation Sans" font-size="10.500" fill="#000" textLength="39.500" lengthAdjust="spacingAndGlyphs">MATICS</text>
</svg>
<!-- labels (coords relative to strip: x-313, y-950) -->
<div class="a" style="left:2px;top:109px;width:122px;height:19px;background:rgba(28,28,28,.82)"></div>
<div class="t" style="left:24px;top:110px;font-size:13.300px;color:#fff;line-height:17px">Bintoro Abdillah</div>
<div class="a" style="left:229px;top:109px;width:78px;height:19px;background:rgba(28,28,28,.82)"></div>
<div class="t" style="left:250px;top:110px;font-size:12.700px;color:#fff;line-height:17px">M.Hasan</div>
<div class="a" style="left:454px;top:109px;width:111px;height:19px;background:#2b2b2b"></div>
<div class="t" style="left:458.500px;top:110px;font-size:13px;color:#fff;line-height:17px">muhammad faisal</div>
<div class="a" style="left:681px;top:109px;width:91px;height:19px;background:#2b2b2b"></div>
<div class="t" style="left:702px;top:110px;font-size:13px;color:#fff;line-height:17px">Ilham Mulia</div>
<div class="a" style="left:907px;top:109px;width:179px;height:19px;background:rgba(28,28,28,.82)"></div>
<div class="t" style="left:928.500px;top:110px;font-size:13px;color:#fff;line-height:17px">Abdurrahman Yusuf Irsyad</div>
<div class="a" style="left:1133px;top:109px;width:91px;height:19px;background:#2b2b2b"></div>
<div class="t" style="left:1154px;top:110px;font-size:12.600px;color:#fff;line-height:17px">Brainmatics</div>
<svg style="left:0;top:0" width="1359" height="130" viewBox="0 0 1359 130">
<defs><g id="mic"><rect x="-2.300" y="-6" width="4.600" height="8.500" rx="2.300" fill="#e8505a"/><path d="M-4.500 0 Q-4.500 5 0 5 Q4.500 5 4.500 0 M0 5 V7.500" fill="none" stroke="#e8505a" stroke-width="1.200"/><path d="M-5.500 7 L5.500 -6.500" stroke="#e8505a" stroke-width="1.500"/></g></defs>
<use href="#mic" x="12" y="118"/><use href="#mic" x="239" y="118"/><use href="#mic" x="691" y="118"/><use href="#mic" x="917" y="118"/><use href="#mic" x="1143" y="118"/>
</svg>
</div>
</body></html>
